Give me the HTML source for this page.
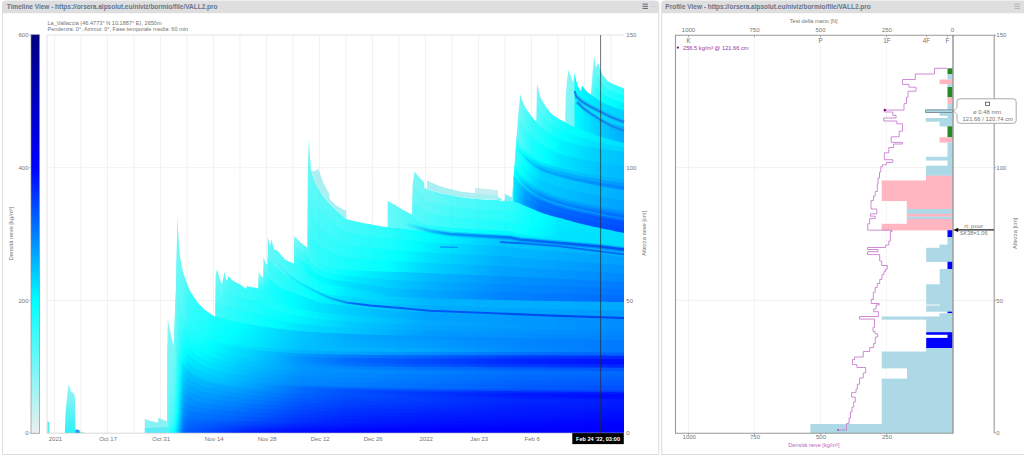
<!DOCTYPE html>
<html lang="it"><head><meta charset="utf-8"><title>niViz</title>
<style>html,body{margin:0;padding:0;background:#fff;overflow:hidden}body{width:1024px;height:457px;position:relative}</style></head>
<body>
<svg width="1024" height="457" viewBox="0 0 1024 457" style="position:absolute;left:0;top:0" font-family="Liberation Sans, sans-serif">
<path d="M2.5 454.5V4a3 3 0 0 1 3-3H655.8a3 3 0 0 1 3 3V454.5Z" fill="#fff" stroke="#dcdcdc" stroke-width="1"/>
<path d="M2.5 13.3V4a3 3 0 0 1 3-3H655.8a3 3 0 0 1 3 3V13.3Z" fill="#dedede"/>
<path d="M661.7 454.5V4a3 3 0 0 1 3-3H1027.0a3 3 0 0 1 3 3V454.5Z" fill="#fff" stroke="#dcdcdc" stroke-width="1"/>
<path d="M661.7 13.3V4a3 3 0 0 1 3-3H1027.0a3 3 0 0 1 3 3V13.3Z" fill="#dedede"/>
<text x="6.8" y="9.4" font-size="7.4" font-weight="bold" fill="#66748c" textLength="210.7" lengthAdjust="spacingAndGlyphs">Timeline View - https://orsera.alpsolut.eu/niviz/bormio/file/VALL2.pro</text>
<text x="665.3" y="9.4" font-size="7.4" font-weight="bold" fill="#66748c" textLength="205.5" lengthAdjust="spacingAndGlyphs">Profile View - https://orsera.alpsolut.eu/niviz/bormio/file/VALL2.pro</text>
<rect x="642.5" y="3.6" width="5.4" height="1.1" fill="#66727f" opacity="1.00"/>
<rect x="642.5" y="5.8" width="5.4" height="1.1" fill="#66727f" opacity="1.00"/>
<rect x="642.5" y="7.9" width="5.4" height="1.1" fill="#66727f" opacity="1.00"/>
<rect x="1014.5" y="3.6" width="5.4" height="1.1" fill="#66727f" opacity="0.35"/>
<rect x="1014.5" y="5.8" width="5.4" height="1.1" fill="#66727f" opacity="0.35"/>
<rect x="1014.5" y="7.9" width="5.4" height="1.1" fill="#66727f" opacity="0.35"/>
<rect x="651.2" y="6.2" width="4.2" height="0.9" fill="#c9cdd2"/>
<text x="47.5" y="24.9" font-size="5.6" fill="#747474">La_Vallaccia (46.4773° N 10.1887° E), 2650m</text>
<text x="47.5" y="31.3" font-size="5.6" fill="#747474">Pendenza: 0°, Azimut: 0°, Fase temporale media: 60 min</text>
<defs><linearGradient id="cb" x1="0" y1="1" x2="0" y2="0"><stop offset="0" stop-color="#eeeeee"/><stop offset="0.3333" stop-color="#00ffff"/><stop offset="0.6667" stop-color="#0000ff"/><stop offset="1" stop-color="#000080"/></linearGradient></defs>
<rect x="31" y="34.7" width="8.5" height="398.6" fill="url(#cb)" stroke="#888" stroke-opacity="0.8" stroke-width="0.8"/>
<text x="28.5" y="37.2" font-size="6.05" fill="#747474" text-anchor="end">600</text>
<text x="28.5" y="169.9" font-size="6.05" fill="#747474" text-anchor="end">400</text>
<text x="28.5" y="302.5" font-size="6.05" fill="#747474" text-anchor="end">200</text>
<text x="28.5" y="435.2" font-size="6.05" fill="#747474" text-anchor="end">0</text>
<line x1="29.3" y1="35.0" x2="31" y2="35.0" stroke="#aaa" stroke-width="0.7"/>
<line x1="29.3" y1="167.7" x2="31" y2="167.7" stroke="#aaa" stroke-width="0.7"/>
<line x1="29.3" y1="300.3" x2="31" y2="300.3" stroke="#aaa" stroke-width="0.7"/>
<line x1="29.3" y1="433.0" x2="31" y2="433.0" stroke="#aaa" stroke-width="0.7"/>
<text transform="translate(13.4 233.6) rotate(-90)" font-size="5.85" fill="#747474" text-anchor="middle">Densità neve [kg/m³]</text>
<line x1="54.4" y1="35" x2="54.4" y2="433" stroke="#f1f1f1" stroke-width="0.8"/>
<line x1="80.9" y1="35" x2="80.9" y2="433" stroke="#f1f1f1" stroke-width="0.8"/>
<line x1="107.4" y1="35" x2="107.4" y2="433" stroke="#f1f1f1" stroke-width="0.8"/>
<line x1="133.9" y1="35" x2="133.9" y2="433" stroke="#f1f1f1" stroke-width="0.8"/>
<line x1="160.4" y1="35" x2="160.4" y2="433" stroke="#f1f1f1" stroke-width="0.8"/>
<line x1="186.9" y1="35" x2="186.9" y2="433" stroke="#f1f1f1" stroke-width="0.8"/>
<line x1="213.4" y1="35" x2="213.4" y2="433" stroke="#f1f1f1" stroke-width="0.8"/>
<line x1="239.9" y1="35" x2="239.9" y2="433" stroke="#f1f1f1" stroke-width="0.8"/>
<line x1="266.4" y1="35" x2="266.4" y2="433" stroke="#f1f1f1" stroke-width="0.8"/>
<line x1="292.9" y1="35" x2="292.9" y2="433" stroke="#f1f1f1" stroke-width="0.8"/>
<line x1="319.4" y1="35" x2="319.4" y2="433" stroke="#f1f1f1" stroke-width="0.8"/>
<line x1="345.9" y1="35" x2="345.9" y2="433" stroke="#f1f1f1" stroke-width="0.8"/>
<line x1="372.4" y1="35" x2="372.4" y2="433" stroke="#f1f1f1" stroke-width="0.8"/>
<line x1="398.9" y1="35" x2="398.9" y2="433" stroke="#f1f1f1" stroke-width="0.8"/>
<line x1="425.4" y1="35" x2="425.4" y2="433" stroke="#f1f1f1" stroke-width="0.8"/>
<line x1="451.9" y1="35" x2="451.9" y2="433" stroke="#f1f1f1" stroke-width="0.8"/>
<line x1="478.4" y1="35" x2="478.4" y2="433" stroke="#f1f1f1" stroke-width="0.8"/>
<line x1="504.9" y1="35" x2="504.9" y2="433" stroke="#f1f1f1" stroke-width="0.8"/>
<line x1="531.4" y1="35" x2="531.4" y2="433" stroke="#f1f1f1" stroke-width="0.8"/>
<line x1="557.9" y1="35" x2="557.9" y2="433" stroke="#f1f1f1" stroke-width="0.8"/>
<line x1="584.4" y1="35" x2="584.4" y2="433" stroke="#f1f1f1" stroke-width="0.8"/>
<line x1="610.9" y1="35" x2="610.9" y2="433" stroke="#f1f1f1" stroke-width="0.8"/>
<line x1="47" y1="167.7" x2="624" y2="167.7" stroke="#f1f1f1" stroke-width="0.8"/>
<line x1="47" y1="300.3" x2="624" y2="300.3" stroke="#f1f1f1" stroke-width="0.8"/>
<g>
<defs><linearGradient id="g0" gradientUnits="userSpaceOnUse" x1="590.60" y1="0" x2="624.00" y2="0"><stop offset="0.0000" stop-color="#84f6f6"/><stop offset="0.3593" stop-color="#52f9f9"/><stop offset="0.6587" stop-color="#38fbfb"/><stop offset="1.0000" stop-color="#23fdfd"/></linearGradient><linearGradient id="g1" gradientUnits="userSpaceOnUse" x1="590.60" y1="0" x2="624.00" y2="0"><stop offset="0.0000" stop-color="#7af6f6"/><stop offset="0.2994" stop-color="#34fbfb"/><stop offset="1.0000" stop-color="#09fefe"/></linearGradient><linearGradient id="g2" gradientUnits="userSpaceOnUse" x1="590.60" y1="0" x2="624.00" y2="0"><stop offset="0.0000" stop-color="#70f7f7"/><stop offset="0.1198" stop-color="#42fafa"/><stop offset="0.2994" stop-color="#11fefe"/><stop offset="0.6587" stop-color="#00feff"/><stop offset="1.0000" stop-color="#00edff"/></linearGradient><linearGradient id="g3" gradientUnits="userSpaceOnUse" x1="565.50" y1="0" x2="624.00" y2="0"><stop offset="0.0000" stop-color="#86f5f5"/><stop offset="0.1368" stop-color="#7ff6f6"/><stop offset="0.1709" stop-color="#02ffff"/><stop offset="0.5812" stop-color="#00dfff"/><stop offset="1.0000" stop-color="#00cfff"/></linearGradient><linearGradient id="g4" gradientUnits="userSpaceOnUse" x1="565.50" y1="0" x2="624.00" y2="0"><stop offset="0.0000" stop-color="#80f6f6"/><stop offset="0.1368" stop-color="#76f7f7"/><stop offset="0.1709" stop-color="#00fbff"/><stop offset="0.5812" stop-color="#00cdff"/><stop offset="1.0000" stop-color="#00afff"/></linearGradient><linearGradient id="g5" gradientUnits="userSpaceOnUse" x1="535.40" y1="0" x2="624.00" y2="0"><stop offset="0.0000" stop-color="#73f7f7"/><stop offset="0.0226" stop-color="#71f7f7"/><stop offset="0.1129" stop-color="#49fafa"/><stop offset="0.3386" stop-color="#0cfefe"/><stop offset="0.4966" stop-color="#00feff"/><stop offset="0.7223" stop-color="#00eaff"/><stop offset="1.0000" stop-color="#00e1ff"/></linearGradient><linearGradient id="g6" gradientUnits="userSpaceOnUse" x1="535.40" y1="0" x2="624.00" y2="0"><stop offset="0.0000" stop-color="#5ef8f8"/><stop offset="0.0226" stop-color="#5cf8f8"/><stop offset="0.1129" stop-color="#37fbfb"/><stop offset="0.2032" stop-color="#1bfdfd"/><stop offset="0.3386" stop-color="#00ffff"/><stop offset="0.7223" stop-color="#00ddff"/><stop offset="1.0000" stop-color="#00d3ff"/></linearGradient><linearGradient id="g7" gradientUnits="userSpaceOnUse" x1="511.80" y1="0" x2="624.00" y2="0"><stop offset="0.0000" stop-color="#78f6f6"/><stop offset="0.0713" stop-color="#6df7f7"/><stop offset="0.1426" stop-color="#45fafa"/><stop offset="0.2139" stop-color="#2cfcfc"/><stop offset="0.3922" stop-color="#01ffff"/><stop offset="0.4456" stop-color="#00f4ff"/><stop offset="0.7843" stop-color="#00cdff"/><stop offset="1.0000" stop-color="#00c1ff"/></linearGradient><linearGradient id="g8" gradientUnits="userSpaceOnUse" x1="516.36" y1="0" x2="624.00" y2="0"><stop offset="0.0000" stop-color="#62f8f8"/><stop offset="0.0372" stop-color="#55f9f9"/><stop offset="0.0929" stop-color="#33fbfb"/><stop offset="0.1672" stop-color="#16fdfd"/><stop offset="0.2787" stop-color="#00feff"/><stop offset="0.4273" stop-color="#00e2ff"/><stop offset="0.7618" stop-color="#00c5ff"/><stop offset="1.0000" stop-color="#00b9ff"/></linearGradient><linearGradient id="g9" gradientUnits="userSpaceOnUse" x1="516.36" y1="0" x2="624.00" y2="0"><stop offset="0.0000" stop-color="#4ff9f9"/><stop offset="0.0929" stop-color="#19fdfd"/><stop offset="0.1486" stop-color="#02ffff"/><stop offset="0.1672" stop-color="#00f9ff"/><stop offset="0.4088" stop-color="#00cfff"/><stop offset="1.0000" stop-color="#00abff"/></linearGradient><linearGradient id="g10" gradientUnits="userSpaceOnUse" x1="516.36" y1="0" x2="624.00" y2="0"><stop offset="0.0000" stop-color="#3afbfb"/><stop offset="0.0743" stop-color="#07fefe"/><stop offset="0.0929" stop-color="#00fbff"/><stop offset="0.1858" stop-color="#00d6ff"/><stop offset="0.2787" stop-color="#00c5ff"/><stop offset="0.4645" stop-color="#00b3ff"/><stop offset="1.0000" stop-color="#0097ff"/></linearGradient><linearGradient id="g11" gradientUnits="userSpaceOnUse" x1="516.36" y1="0" x2="624.00" y2="0"><stop offset="0.0000" stop-color="#24fcfc"/><stop offset="0.0372" stop-color="#08fefe"/><stop offset="0.0557" stop-color="#00f7ff"/><stop offset="0.0929" stop-color="#00ddff"/><stop offset="0.2230" stop-color="#00acff"/><stop offset="1.0000" stop-color="#0083ff"/></linearGradient><linearGradient id="g12" gradientUnits="userSpaceOnUse" x1="515.66" y1="0" x2="624.00" y2="0"><stop offset="0.0000" stop-color="#38fbfb"/><stop offset="0.0923" stop-color="#00ffff"/><stop offset="0.2400" stop-color="#00d3ff"/><stop offset="1.0000" stop-color="#00adff"/></linearGradient><linearGradient id="g13" gradientUnits="userSpaceOnUse" x1="515.66" y1="0" x2="624.00" y2="0"><stop offset="0.0000" stop-color="#2dfcfc"/><stop offset="0.0738" stop-color="#00ffff"/><stop offset="0.2215" stop-color="#00cbff"/><stop offset="1.0000" stop-color="#00a1ff"/></linearGradient><linearGradient id="g14" gradientUnits="userSpaceOnUse" x1="514.50" y1="0" x2="624.00" y2="0"><stop offset="0.0000" stop-color="#26fcfc"/><stop offset="0.0548" stop-color="#04ffff"/><stop offset="0.0731" stop-color="#00f7ff"/><stop offset="0.1096" stop-color="#00e3ff"/><stop offset="0.2374" stop-color="#00baff"/><stop offset="1.0000" stop-color="#0092ff"/></linearGradient><linearGradient id="g15" gradientUnits="userSpaceOnUse" x1="514.50" y1="0" x2="624.00" y2="0"><stop offset="0.0000" stop-color="#17fdfd"/><stop offset="0.0365" stop-color="#00fdff"/><stop offset="0.0913" stop-color="#00d4ff"/><stop offset="0.2374" stop-color="#00a2ff"/><stop offset="1.0000" stop-color="#007eff"/></linearGradient><linearGradient id="g16" gradientUnits="userSpaceOnUse" x1="514.50" y1="0" x2="624.00" y2="0"><stop offset="0.0000" stop-color="#08fefe"/><stop offset="0.0183" stop-color="#00f9ff"/><stop offset="0.0913" stop-color="#00bfff"/><stop offset="0.1096" stop-color="#00b6ff"/><stop offset="0.2374" stop-color="#008bff"/><stop offset="1.0000" stop-color="#006aff"/></linearGradient><linearGradient id="g17" gradientUnits="userSpaceOnUse" x1="513.93" y1="0" x2="624.00" y2="0"><stop offset="0.0000" stop-color="#19fdfd"/><stop offset="0.0363" stop-color="#02ffff"/><stop offset="0.0545" stop-color="#00f5ff"/><stop offset="0.1090" stop-color="#00d3ff"/><stop offset="0.2362" stop-color="#00acff"/><stop offset="1.0000" stop-color="#0086ff"/></linearGradient><linearGradient id="g18" gradientUnits="userSpaceOnUse" x1="513.93" y1="0" x2="624.00" y2="0"><stop offset="0.0000" stop-color="#00ffff"/><stop offset="0.1090" stop-color="#00b3ff"/><stop offset="0.2362" stop-color="#008aff"/><stop offset="1.0000" stop-color="#0064ff"/></linearGradient><linearGradient id="g19" gradientUnits="userSpaceOnUse" x1="513.64" y1="0" x2="624.00" y2="0"><stop offset="0.0000" stop-color="#00efff"/><stop offset="0.1087" stop-color="#009fff"/><stop offset="0.2356" stop-color="#0076ff"/><stop offset="0.4168" stop-color="#0068ff"/><stop offset="1.0000" stop-color="#0050ff"/></linearGradient><linearGradient id="g20" gradientUnits="userSpaceOnUse" x1="513.64" y1="0" x2="624.00" y2="0"><stop offset="0.0000" stop-color="#00e5ff"/><stop offset="0.1087" stop-color="#0096ff"/><stop offset="0.2356" stop-color="#006eff"/><stop offset="0.4350" stop-color="#005fff"/><stop offset="1.0000" stop-color="#0049ff"/></linearGradient><linearGradient id="g21" gradientUnits="userSpaceOnUse" x1="412.40" y1="0" x2="624.00" y2="0"><stop offset="0.0000" stop-color="#7bf6f6"/><stop offset="0.1796" stop-color="#57f9f9"/><stop offset="0.4631" stop-color="#35fbfb"/><stop offset="0.5577" stop-color="#0efefe"/><stop offset="0.6144" stop-color="#01ffff"/><stop offset="0.6994" stop-color="#00eaff"/><stop offset="1.0000" stop-color="#00ddff"/></linearGradient><linearGradient id="g22" gradientUnits="userSpaceOnUse" x1="412.40" y1="0" x2="624.00" y2="0"><stop offset="0.0000" stop-color="#6bf7f7"/><stop offset="0.1796" stop-color="#47fafa"/><stop offset="0.4631" stop-color="#26fcfc"/><stop offset="0.5955" stop-color="#00ffff"/><stop offset="0.6994" stop-color="#00e7ff"/><stop offset="1.0000" stop-color="#00ddff"/></linearGradient><linearGradient id="g23" gradientUnits="userSpaceOnUse" x1="412.40" y1="0" x2="624.00" y2="0"><stop offset="0.0000" stop-color="#5bf8f8"/><stop offset="0.1418" stop-color="#3dfbfb"/><stop offset="0.4631" stop-color="#17fdfd"/><stop offset="0.5671" stop-color="#00ffff"/><stop offset="0.6994" stop-color="#00e4ff"/><stop offset="1.0000" stop-color="#00dcff"/></linearGradient><linearGradient id="g24" gradientUnits="userSpaceOnUse" x1="387.60" y1="0" x2="624.00" y2="0"><stop offset="0.0000" stop-color="#68f8f8"/><stop offset="0.1015" stop-color="#48fafa"/><stop offset="0.1777" stop-color="#27fcfc"/><stop offset="0.4230" stop-color="#00ffff"/><stop offset="0.7107" stop-color="#00e4ff"/><stop offset="1.0000" stop-color="#00daff"/></linearGradient><linearGradient id="g25" gradientUnits="userSpaceOnUse" x1="307.70" y1="0" x2="624.00" y2="0"><stop offset="0.0000" stop-color="#71f7f7"/><stop offset="0.0126" stop-color="#60f8f8"/><stop offset="0.0253" stop-color="#5bf8f8"/><stop offset="0.2466" stop-color="#2cfcfc"/><stop offset="0.3794" stop-color="#00feff"/><stop offset="0.6133" stop-color="#00c6ff"/><stop offset="1.0000" stop-color="#00aaff"/></linearGradient><linearGradient id="g26" gradientUnits="userSpaceOnUse" x1="307.70" y1="0" x2="624.00" y2="0"><stop offset="0.0000" stop-color="#65f8f8"/><stop offset="0.0126" stop-color="#53f9f9"/><stop offset="0.0316" stop-color="#4cfafa"/><stop offset="0.1201" stop-color="#35fbfb"/><stop offset="0.2466" stop-color="#1efdfd"/><stop offset="0.3414" stop-color="#00feff"/><stop offset="0.3920" stop-color="#00ecff"/><stop offset="0.6070" stop-color="#00bbff"/><stop offset="1.0000" stop-color="#009fff"/></linearGradient><linearGradient id="g27" gradientUnits="userSpaceOnUse" x1="307.70" y1="0" x2="624.00" y2="0"><stop offset="0.0000" stop-color="#59f9f9"/><stop offset="0.0126" stop-color="#45fafa"/><stop offset="0.0190" stop-color="#42fafa"/><stop offset="0.2972" stop-color="#00ffff"/><stop offset="0.3857" stop-color="#00e0ff"/><stop offset="0.6070" stop-color="#00b0ff"/><stop offset="1.0000" stop-color="#0093ff"/></linearGradient><linearGradient id="g28" gradientUnits="userSpaceOnUse" x1="307.70" y1="0" x2="624.00" y2="0"><stop offset="0.0000" stop-color="#4df9f9"/><stop offset="0.0126" stop-color="#38fbfb"/><stop offset="0.0316" stop-color="#31fbfb"/><stop offset="0.1201" stop-color="#19fdfd"/><stop offset="0.2529" stop-color="#00ffff"/><stop offset="0.3857" stop-color="#00d3ff"/><stop offset="0.6007" stop-color="#00a6ff"/><stop offset="1.0000" stop-color="#0088ff"/></linearGradient><linearGradient id="g29" gradientUnits="userSpaceOnUse" x1="294.00" y1="0" x2="624.00" y2="0"><stop offset="0.0000" stop-color="#72f7f7"/><stop offset="0.0424" stop-color="#45fafa"/><stop offset="0.1091" stop-color="#1afdfd"/><stop offset="0.1697" stop-color="#00feff"/><stop offset="0.4182" stop-color="#00b9ff"/><stop offset="0.6303" stop-color="#0094ff"/><stop offset="1.0000" stop-color="#007cff"/></linearGradient><linearGradient id="g30" gradientUnits="userSpaceOnUse" x1="294.00" y1="0" x2="624.00" y2="0"><stop offset="0.0000" stop-color="#5cf8f8"/><stop offset="0.0424" stop-color="#2afcfc"/><stop offset="0.1273" stop-color="#00feff"/><stop offset="0.1758" stop-color="#00ecff"/><stop offset="0.4121" stop-color="#00b1ff"/><stop offset="0.6242" stop-color="#008cff"/><stop offset="1.0000" stop-color="#0074ff"/></linearGradient><linearGradient id="g31" gradientUnits="userSpaceOnUse" x1="294.00" y1="0" x2="624.00" y2="0"><stop offset="0.0000" stop-color="#46fafa"/><stop offset="0.0424" stop-color="#0efefe"/><stop offset="0.0788" stop-color="#00feff"/><stop offset="0.1818" stop-color="#00dbff"/><stop offset="0.4061" stop-color="#00a9ff"/><stop offset="0.6303" stop-color="#0083ff"/><stop offset="1.0000" stop-color="#006cff"/></linearGradient><linearGradient id="g32" gradientUnits="userSpaceOnUse" x1="258.50" y1="0" x2="624.00" y2="0"><stop offset="0.0000" stop-color="#70f7f7"/><stop offset="0.0492" stop-color="#57f9f9"/><stop offset="0.1423" stop-color="#18fdfd"/><stop offset="0.1970" stop-color="#00ffff"/><stop offset="0.2517" stop-color="#00e5ff"/><stop offset="0.4761" stop-color="#00b4ff"/><stop offset="1.0000" stop-color="#00a9ff"/></linearGradient><linearGradient id="g33" gradientUnits="userSpaceOnUse" x1="258.50" y1="0" x2="624.00" y2="0"><stop offset="0.0000" stop-color="#56f9f9"/><stop offset="0.0274" stop-color="#41fafa"/><stop offset="0.1532" stop-color="#00feff"/><stop offset="0.2517" stop-color="#00d8ff"/><stop offset="0.4706" stop-color="#00acff"/><stop offset="1.0000" stop-color="#009bff"/></linearGradient><linearGradient id="g34" gradientUnits="userSpaceOnUse" x1="258.50" y1="0" x2="624.00" y2="0"><stop offset="0.0000" stop-color="#3cfbfb"/><stop offset="0.0274" stop-color="#1dfdfd"/><stop offset="0.0930" stop-color="#00feff"/><stop offset="0.1423" stop-color="#00eaff"/><stop offset="0.2462" stop-color="#00cdff"/><stop offset="0.4651" stop-color="#00a4ff"/><stop offset="1.0000" stop-color="#008dff"/></linearGradient><linearGradient id="g35" gradientUnits="userSpaceOnUse" x1="215.50" y1="0" x2="624.00" y2="0"><stop offset="0.0000" stop-color="#6df7f7"/><stop offset="0.0392" stop-color="#45fafa"/><stop offset="0.2056" stop-color="#00ffff"/><stop offset="0.3280" stop-color="#00d5ff"/><stop offset="0.5239" stop-color="#00a9ff"/><stop offset="1.0000" stop-color="#008aff"/></linearGradient><linearGradient id="g36" gradientUnits="userSpaceOnUse" x1="215.50" y1="0" x2="624.00" y2="0"><stop offset="0.0000" stop-color="#59f9f9"/><stop offset="0.0392" stop-color="#38fbfb"/><stop offset="0.1763" stop-color="#00feff"/><stop offset="0.3280" stop-color="#00ccff"/><stop offset="0.5288" stop-color="#00a2ff"/><stop offset="1.0000" stop-color="#0086ff"/></linearGradient><linearGradient id="g37" gradientUnits="userSpaceOnUse" x1="215.50" y1="0" x2="624.00" y2="0"><stop offset="0.0000" stop-color="#45fafa"/><stop offset="0.0392" stop-color="#2bfcfc"/><stop offset="0.1420" stop-color="#00feff"/><stop offset="0.2105" stop-color="#00e1ff"/><stop offset="0.5239" stop-color="#009cff"/><stop offset="1.0000" stop-color="#0082ff"/></linearGradient><linearGradient id="g38" gradientUnits="userSpaceOnUse" x1="167.80" y1="0" x2="624.00" y2="0"><stop offset="0.0000" stop-color="#82f6f6"/><stop offset="0.0219" stop-color="#73f7f7"/><stop offset="0.0482" stop-color="#3bfbfb"/><stop offset="0.1052" stop-color="#17fdfd"/><stop offset="0.1578" stop-color="#00ffff"/><stop offset="0.2893" stop-color="#00c8ff"/><stop offset="0.4033" stop-color="#00a9ff"/><stop offset="0.6576" stop-color="#008cff"/><stop offset="1.0000" stop-color="#0079ff"/></linearGradient><linearGradient id="g39" gradientUnits="userSpaceOnUse" x1="167.80" y1="0" x2="624.00" y2="0"><stop offset="0.0000" stop-color="#81f6f6"/><stop offset="0.0219" stop-color="#71f7f7"/><stop offset="0.0482" stop-color="#38fbfb"/><stop offset="0.1052" stop-color="#13fefe"/><stop offset="0.1491" stop-color="#00ffff"/><stop offset="0.2893" stop-color="#00c6ff"/><stop offset="0.3989" stop-color="#00adff"/><stop offset="0.7672" stop-color="#0086ff"/><stop offset="1.0000" stop-color="#0079ff"/></linearGradient><linearGradient id="g40" gradientUnits="userSpaceOnUse" x1="167.80" y1="0" x2="624.00" y2="0"><stop offset="0.0000" stop-color="#7ff6f6"/><stop offset="0.0219" stop-color="#70f7f7"/><stop offset="0.0482" stop-color="#35fbfb"/><stop offset="0.0526" stop-color="#31fbfb"/><stop offset="0.1052" stop-color="#0ffefe"/><stop offset="0.1403" stop-color="#00ffff"/><stop offset="0.2893" stop-color="#00c3ff"/><stop offset="0.3989" stop-color="#00b0ff"/><stop offset="0.7716" stop-color="#0088ff"/><stop offset="1.0000" stop-color="#0079ff"/></linearGradient><linearGradient id="g41" gradientUnits="userSpaceOnUse" x1="167.80" y1="0" x2="624.00" y2="0"><stop offset="0.0000" stop-color="#7ef6f6"/><stop offset="0.0219" stop-color="#6ef7f7"/><stop offset="0.0482" stop-color="#32fbfb"/><stop offset="0.1008" stop-color="#0dfefe"/><stop offset="0.1315" stop-color="#00feff"/><stop offset="0.2937" stop-color="#00c0ff"/><stop offset="0.5699" stop-color="#00a6ff"/><stop offset="0.7804" stop-color="#008aff"/><stop offset="1.0000" stop-color="#0079ff"/></linearGradient><linearGradient id="g42" gradientUnits="userSpaceOnUse" x1="167.80" y1="0" x2="624.00" y2="0"><stop offset="0.0000" stop-color="#7df6f6"/><stop offset="0.0219" stop-color="#6bf7f7"/><stop offset="0.0482" stop-color="#2ffcfc"/><stop offset="0.1184" stop-color="#00feff"/><stop offset="0.2937" stop-color="#00b3ff"/><stop offset="0.7628" stop-color="#0073ff"/><stop offset="1.0000" stop-color="#005fff"/></linearGradient><linearGradient id="g43" gradientUnits="userSpaceOnUse" x1="167.80" y1="0" x2="624.00" y2="0"><stop offset="0.0000" stop-color="#7df6f6"/><stop offset="0.0219" stop-color="#68f8f8"/><stop offset="0.0482" stop-color="#2cfcfc"/><stop offset="0.1008" stop-color="#00ffff"/><stop offset="0.2893" stop-color="#009eff"/><stop offset="0.3946" stop-color="#007dff"/><stop offset="0.7760" stop-color="#003dff"/><stop offset="1.0000" stop-color="#002aff"/></linearGradient><linearGradient id="g44" gradientUnits="userSpaceOnUse" x1="167.80" y1="0" x2="624.00" y2="0"><stop offset="0.0000" stop-color="#7df6f6"/><stop offset="0.0219" stop-color="#66f8f8"/><stop offset="0.0482" stop-color="#2afcfc"/><stop offset="0.0964" stop-color="#00ffff"/><stop offset="0.1491" stop-color="#00e0ff"/><stop offset="0.2017" stop-color="#00caff"/><stop offset="0.2893" stop-color="#0093ff"/><stop offset="0.3946" stop-color="#006aff"/><stop offset="0.7760" stop-color="#0023ff"/><stop offset="1.0000" stop-color="#000fff"/></linearGradient><linearGradient id="g45" gradientUnits="userSpaceOnUse" x1="167.80" y1="0" x2="624.00" y2="0"><stop offset="0.0000" stop-color="#7bf6f6"/><stop offset="0.0219" stop-color="#65f8f8"/><stop offset="0.0351" stop-color="#41fafa"/><stop offset="0.0482" stop-color="#28fcfc"/><stop offset="0.0964" stop-color="#00fdff"/><stop offset="0.2893" stop-color="#0094ff"/><stop offset="0.3902" stop-color="#0074ff"/><stop offset="0.7584" stop-color="#0039ff"/><stop offset="1.0000" stop-color="#0027ff"/></linearGradient><linearGradient id="g46" gradientUnits="userSpaceOnUse" x1="167.80" y1="0" x2="624.00" y2="0"><stop offset="0.0000" stop-color="#78f6f6"/><stop offset="0.0175" stop-color="#69f7f7"/><stop offset="0.0351" stop-color="#3bfbfb"/><stop offset="0.0482" stop-color="#24fcfc"/><stop offset="0.0921" stop-color="#00feff"/><stop offset="0.1534" stop-color="#00d8ff"/><stop offset="0.2893" stop-color="#0098ff"/><stop offset="0.3113" stop-color="#0093ff"/><stop offset="0.3989" stop-color="#0083ff"/><stop offset="0.7672" stop-color="#005fff"/><stop offset="1.0000" stop-color="#0055ff"/></linearGradient><linearGradient id="g47" gradientUnits="userSpaceOnUse" x1="167.80" y1="0" x2="624.00" y2="0"><stop offset="0.0000" stop-color="#77f6f6"/><stop offset="0.0175" stop-color="#66f8f8"/><stop offset="0.0351" stop-color="#32fbfb"/><stop offset="0.0482" stop-color="#1afdfd"/><stop offset="0.0833" stop-color="#00feff"/><stop offset="0.1622" stop-color="#00ceff"/><stop offset="0.2937" stop-color="#0096ff"/><stop offset="0.7584" stop-color="#0070ff"/><stop offset="1.0000" stop-color="#0068ff"/></linearGradient><linearGradient id="g48" gradientUnits="userSpaceOnUse" x1="167.80" y1="0" x2="624.00" y2="0"><stop offset="0.0000" stop-color="#77f6f6"/><stop offset="0.0175" stop-color="#64f8f8"/><stop offset="0.0219" stop-color="#59f9f9"/><stop offset="0.0351" stop-color="#24fcfc"/><stop offset="0.0482" stop-color="#0bfefe"/><stop offset="0.0658" stop-color="#00feff"/><stop offset="0.1052" stop-color="#00e4ff"/><stop offset="0.1754" stop-color="#00c1ff"/><stop offset="0.2937" stop-color="#0091ff"/><stop offset="0.7716" stop-color="#0069ff"/><stop offset="1.0000" stop-color="#0060ff"/></linearGradient><linearGradient id="g49" gradientUnits="userSpaceOnUse" x1="167.80" y1="0" x2="624.00" y2="0"><stop offset="0.0000" stop-color="#77f6f6"/><stop offset="0.0175" stop-color="#61f8f8"/><stop offset="0.0219" stop-color="#55f9f9"/><stop offset="0.0351" stop-color="#16fdfd"/><stop offset="0.0438" stop-color="#04ffff"/><stop offset="0.0482" stop-color="#00f9ff"/><stop offset="0.2060" stop-color="#00acff"/><stop offset="0.2893" stop-color="#008dff"/><stop offset="0.7804" stop-color="#0062ff"/><stop offset="1.0000" stop-color="#0058ff"/></linearGradient><linearGradient id="g50" gradientUnits="userSpaceOnUse" x1="167.80" y1="0" x2="624.00" y2="0"><stop offset="0.0000" stop-color="#77f6f6"/><stop offset="0.0175" stop-color="#5ff8f8"/><stop offset="0.0219" stop-color="#50f9f9"/><stop offset="0.0307" stop-color="#1cfdfd"/><stop offset="0.0351" stop-color="#09fefe"/><stop offset="0.0395" stop-color="#00feff"/><stop offset="0.0482" stop-color="#00e9ff"/><stop offset="0.0526" stop-color="#00e6ff"/><stop offset="0.2060" stop-color="#00a5ff"/><stop offset="0.2893" stop-color="#0088ff"/><stop offset="0.7716" stop-color="#005cff"/><stop offset="1.0000" stop-color="#0050ff"/></linearGradient><linearGradient id="g51" gradientUnits="userSpaceOnUse" x1="167.80" y1="0" x2="624.00" y2="0"><stop offset="0.0000" stop-color="#77f6f6"/><stop offset="0.0175" stop-color="#5cf8f8"/><stop offset="0.0219" stop-color="#4df9f9"/><stop offset="0.0307" stop-color="#15fdfd"/><stop offset="0.0351" stop-color="#00ffff"/><stop offset="0.0482" stop-color="#00deff"/><stop offset="0.2981" stop-color="#007eff"/><stop offset="0.4121" stop-color="#006dff"/><stop offset="0.7716" stop-color="#0049ff"/><stop offset="1.0000" stop-color="#003cff"/></linearGradient><linearGradient id="g52" gradientUnits="userSpaceOnUse" x1="167.80" y1="0" x2="624.00" y2="0"><stop offset="0.0000" stop-color="#77f6f6"/><stop offset="0.0175" stop-color="#5bf9f9"/><stop offset="0.0219" stop-color="#4bfafa"/><stop offset="0.0307" stop-color="#13fefe"/><stop offset="0.0351" stop-color="#00fcff"/><stop offset="0.0482" stop-color="#00daff"/><stop offset="0.0526" stop-color="#00d7ff"/><stop offset="0.1403" stop-color="#00baff"/><stop offset="0.2893" stop-color="#0073ff"/><stop offset="0.4033" stop-color="#0059ff"/><stop offset="0.7716" stop-color="#0029ff"/><stop offset="1.0000" stop-color="#001bff"/></linearGradient><linearGradient id="g53" gradientUnits="userSpaceOnUse" x1="167.80" y1="0" x2="624.00" y2="0"><stop offset="0.0000" stop-color="#77f6f6"/><stop offset="0.0175" stop-color="#5af9f9"/><stop offset="0.0219" stop-color="#4afafa"/><stop offset="0.0307" stop-color="#11fefe"/><stop offset="0.0351" stop-color="#00faff"/><stop offset="0.0482" stop-color="#00d7ff"/><stop offset="0.1447" stop-color="#00b6ff"/><stop offset="0.2937" stop-color="#006bff"/><stop offset="0.3946" stop-color="#0050ff"/><stop offset="0.7672" stop-color="#001aff"/><stop offset="1.0000" stop-color="#000aff"/></linearGradient><linearGradient id="g54" gradientUnits="userSpaceOnUse" x1="167.80" y1="0" x2="624.00" y2="0"><stop offset="0.0000" stop-color="#76f7f7"/><stop offset="0.0175" stop-color="#59f9f9"/><stop offset="0.0219" stop-color="#49fafa"/><stop offset="0.0307" stop-color="#0bfefe"/><stop offset="0.0351" stop-color="#00f3ff"/><stop offset="0.0482" stop-color="#00d3ff"/><stop offset="0.1447" stop-color="#00b2ff"/><stop offset="0.2893" stop-color="#006bff"/><stop offset="0.3683" stop-color="#0056ff"/><stop offset="0.7716" stop-color="#001dff"/><stop offset="1.0000" stop-color="#000fff"/></linearGradient><linearGradient id="g55" gradientUnits="userSpaceOnUse" x1="167.80" y1="0" x2="624.00" y2="0"><stop offset="0.0000" stop-color="#73f7f7"/><stop offset="0.0175" stop-color="#58f9f9"/><stop offset="0.0219" stop-color="#46fafa"/><stop offset="0.0307" stop-color="#00feff"/><stop offset="0.0351" stop-color="#00e4ff"/><stop offset="0.0526" stop-color="#00c8ff"/><stop offset="0.1578" stop-color="#00a5ff"/><stop offset="0.2893" stop-color="#0068ff"/><stop offset="0.3814" stop-color="#0051ff"/><stop offset="0.7672" stop-color="#0025ff"/><stop offset="1.0000" stop-color="#001aff"/></linearGradient><linearGradient id="g56" gradientUnits="userSpaceOnUse" x1="167.80" y1="0" x2="624.00" y2="0"><stop offset="0.0000" stop-color="#71f7f7"/><stop offset="0.0175" stop-color="#54f9f9"/><stop offset="0.0219" stop-color="#40fafa"/><stop offset="0.0263" stop-color="#1afdfd"/><stop offset="0.0307" stop-color="#00f2ff"/><stop offset="0.0351" stop-color="#00d6ff"/><stop offset="0.0482" stop-color="#00c0ff"/><stop offset="0.1578" stop-color="#009cff"/><stop offset="0.2893" stop-color="#0062ff"/><stop offset="0.3989" stop-color="#0049ff"/><stop offset="0.7716" stop-color="#0026ff"/><stop offset="1.0000" stop-color="#001cff"/></linearGradient><linearGradient id="g57" gradientUnits="userSpaceOnUse" x1="167.80" y1="0" x2="624.00" y2="0"><stop offset="0.0000" stop-color="#70f7f7"/><stop offset="0.0175" stop-color="#4cfafa"/><stop offset="0.0219" stop-color="#37fbfb"/><stop offset="0.0263" stop-color="#10fefe"/><stop offset="0.0307" stop-color="#00e6ff"/><stop offset="0.0351" stop-color="#00caff"/><stop offset="0.0482" stop-color="#00b5ff"/><stop offset="0.0570" stop-color="#00b1ff"/><stop offset="0.1622" stop-color="#0090ff"/><stop offset="0.2893" stop-color="#005bff"/><stop offset="0.3989" stop-color="#0042ff"/><stop offset="0.7716" stop-color="#0021ff"/><stop offset="1.0000" stop-color="#0018ff"/></linearGradient><linearGradient id="g58" gradientUnits="userSpaceOnUse" x1="167.80" y1="0" x2="624.00" y2="0"><stop offset="0.0000" stop-color="#6ff7f7"/><stop offset="0.0175" stop-color="#45fafa"/><stop offset="0.0219" stop-color="#2efcfc"/><stop offset="0.0263" stop-color="#06ffff"/><stop offset="0.0307" stop-color="#00dbff"/><stop offset="0.0351" stop-color="#00bfff"/><stop offset="0.0482" stop-color="#00a9ff"/><stop offset="0.0570" stop-color="#00a5ff"/><stop offset="0.1622" stop-color="#0086ff"/><stop offset="0.2893" stop-color="#0053ff"/><stop offset="0.3989" stop-color="#003bff"/><stop offset="0.7672" stop-color="#001cff"/><stop offset="1.0000" stop-color="#0014ff"/></linearGradient><linearGradient id="g59" gradientUnits="userSpaceOnUse" x1="167.80" y1="0" x2="624.00" y2="0"><stop offset="0.0000" stop-color="#6ef7f7"/><stop offset="0.0175" stop-color="#3dfbfb"/><stop offset="0.0219" stop-color="#25fcfc"/><stop offset="0.0263" stop-color="#00fbff"/><stop offset="0.0307" stop-color="#00d0ff"/><stop offset="0.0351" stop-color="#00b3ff"/><stop offset="0.0482" stop-color="#009dff"/><stop offset="0.1491" stop-color="#0080ff"/><stop offset="0.2893" stop-color="#004bff"/><stop offset="0.3989" stop-color="#0034ff"/><stop offset="0.5743" stop-color="#0024ff"/><stop offset="1.0000" stop-color="#000fff"/></linearGradient><linearGradient id="g60" gradientUnits="userSpaceOnUse" x1="167.80" y1="0" x2="624.00" y2="0"><stop offset="0.0000" stop-color="#6df7f7"/><stop offset="0.0175" stop-color="#36fbfb"/><stop offset="0.0219" stop-color="#1cfdfd"/><stop offset="0.0263" stop-color="#00f1ff"/><stop offset="0.0307" stop-color="#00c5ff"/><stop offset="0.0351" stop-color="#00a7ff"/><stop offset="0.0482" stop-color="#0091ff"/><stop offset="0.1578" stop-color="#0073ff"/><stop offset="0.2850" stop-color="#0045ff"/><stop offset="0.3989" stop-color="#002dff"/><stop offset="0.5612" stop-color="#001fff"/><stop offset="1.0000" stop-color="#000bff"/></linearGradient><linearGradient id="g61" gradientUnits="userSpaceOnUse" x1="167.80" y1="0" x2="624.00" y2="0"><stop offset="0.0000" stop-color="#6cf7f7"/><stop offset="0.0175" stop-color="#2efcfc"/><stop offset="0.0219" stop-color="#14fefe"/><stop offset="0.0263" stop-color="#00e7ff"/><stop offset="0.0307" stop-color="#00b9ff"/><stop offset="0.0351" stop-color="#009bff"/><stop offset="0.0482" stop-color="#0085ff"/><stop offset="0.1578" stop-color="#0069ff"/><stop offset="0.2893" stop-color="#003cff"/><stop offset="0.3946" stop-color="#0027ff"/><stop offset="0.5743" stop-color="#0018ff"/><stop offset="1.0000" stop-color="#0007ff"/></linearGradient><linearGradient id="g62" gradientUnits="userSpaceOnUse" x1="167.80" y1="0" x2="624.00" y2="0"><stop offset="0.0000" stop-color="#6cf7f7"/><stop offset="0.0175" stop-color="#27fcfc"/><stop offset="0.0219" stop-color="#0bfefe"/><stop offset="0.0263" stop-color="#00dcff"/><stop offset="0.0307" stop-color="#00aeff"/><stop offset="0.0351" stop-color="#008fff"/><stop offset="0.0482" stop-color="#0079ff"/><stop offset="0.1534" stop-color="#0060ff"/><stop offset="0.2893" stop-color="#0034ff"/><stop offset="0.3946" stop-color="#0020ff"/><stop offset="0.5743" stop-color="#0012ff"/><stop offset="1.0000" stop-color="#0002ff"/></linearGradient><linearGradient id="g63" gradientUnits="userSpaceOnUse" x1="167.80" y1="0" x2="624.00" y2="0"><stop offset="0.0000" stop-color="#66f8f8"/><stop offset="0.0175" stop-color="#1dfdfd"/><stop offset="0.0219" stop-color="#01ffff"/><stop offset="0.0307" stop-color="#00a4ff"/><stop offset="0.0351" stop-color="#0086ff"/><stop offset="0.0482" stop-color="#0070ff"/><stop offset="0.2893" stop-color="#002cff"/><stop offset="0.4077" stop-color="#0018ff"/><stop offset="0.5699" stop-color="#000dff"/><stop offset="1.0000" stop-color="#0000ff"/></linearGradient><linearGradient id="g64" gradientUnits="userSpaceOnUse" x1="167.80" y1="0" x2="624.00" y2="0"><stop offset="0.0000" stop-color="#5df8f8"/><stop offset="0.0175" stop-color="#12fefe"/><stop offset="0.0219" stop-color="#00f4ff"/><stop offset="0.0307" stop-color="#009bff"/><stop offset="0.0351" stop-color="#007eff"/><stop offset="0.0482" stop-color="#006aff"/><stop offset="0.2718" stop-color="#0028ff"/><stop offset="0.4077" stop-color="#0012ff"/><stop offset="0.5831" stop-color="#0008ff"/><stop offset="1.0000" stop-color="#0000fe"/></linearGradient><linearGradient id="g65" gradientUnits="userSpaceOnUse" x1="167.80" y1="0" x2="624.00" y2="0"><stop offset="0.0000" stop-color="#53f9f9"/><stop offset="0.0175" stop-color="#06ffff"/><stop offset="0.0219" stop-color="#00e8ff"/><stop offset="0.0307" stop-color="#0093ff"/><stop offset="0.0351" stop-color="#0077ff"/><stop offset="0.0482" stop-color="#0063ff"/><stop offset="0.1929" stop-color="#0032ff"/><stop offset="0.2937" stop-color="#001aff"/><stop offset="0.4077" stop-color="#000cff"/><stop offset="0.7146" stop-color="#0000ff"/><stop offset="1.0000" stop-color="#0000fd"/></linearGradient><linearGradient id="g66" gradientUnits="userSpaceOnUse" x1="167.80" y1="0" x2="624.00" y2="0"><stop offset="0.0000" stop-color="#4afafa"/><stop offset="0.0132" stop-color="#0ffefe"/><stop offset="0.0175" stop-color="#00f9ff"/><stop offset="0.0219" stop-color="#00dcff"/><stop offset="0.0307" stop-color="#008aff"/><stop offset="0.0351" stop-color="#006fff"/><stop offset="0.0482" stop-color="#005dff"/><stop offset="0.2017" stop-color="#0024ff"/><stop offset="0.2893" stop-color="#0012ff"/><stop offset="0.4033" stop-color="#0006ff"/><stop offset="0.5655" stop-color="#0000ff"/><stop offset="1.0000" stop-color="#0000fc"/></linearGradient><linearGradient id="g67" gradientUnits="userSpaceOnUse" x1="167.80" y1="0" x2="624.00" y2="0"><stop offset="0.0000" stop-color="#40fafa"/><stop offset="0.0132" stop-color="#04ffff"/><stop offset="0.0175" stop-color="#00edff"/><stop offset="0.0219" stop-color="#00cfff"/><stop offset="0.0307" stop-color="#0081ff"/><stop offset="0.0351" stop-color="#0068ff"/><stop offset="0.0482" stop-color="#0057ff"/><stop offset="0.1052" stop-color="#0043ff"/><stop offset="0.1622" stop-color="#0024ff"/><stop offset="0.1973" stop-color="#001aff"/><stop offset="0.2850" stop-color="#000aff"/><stop offset="0.4033" stop-color="#0000ff"/><stop offset="1.0000" stop-color="#0000fc"/></linearGradient></defs><path d="M590.6 433.0L590.6 94.3L591.0 94.0L592.0 80.0L594.0 56.0L596.0 67.7L596.6 66.2L598.0 62.8L600.0 68.6L600.5 70.0L602.6 74.7L603.0 75.6L608.0 81.5L608.6 81.8L614.0 84.4L614.6 84.7L616.0 85.2L619.0 86.5L620.6 87.1L624.0 88.4L624.0 433.0Z" fill="url(#g0)"/><path d="M590.6 433.0L590.6 94.3L591.0 94.2L592.0 85.2L594.0 69.7L596.0 77.9L596.6 77.1L598.0 75.1L600.0 79.4L600.5 80.4L602.6 83.9L603.0 84.6L608.0 89.3L608.6 89.6L614.0 92.0L614.6 92.3L616.0 92.8L619.0 94.0L620.6 94.6L624.0 95.8L624.0 433.0Z" fill="url(#g1)"/><path d="M590.6 433.0L590.6 94.3L591.0 94.4L592.0 90.3L594.0 83.3L596.0 88.2L596.6 88.0L598.0 87.5L600.0 90.2L600.5 90.9L602.6 93.2L603.0 93.6L608.0 97.2L608.6 97.4L614.0 99.7L614.6 99.9L616.0 100.4L619.0 101.5L620.6 102.0L624.0 103.1L624.0 433.0Z" fill="url(#g2)"/><path d="M565.5 433.0L565.5 122.0L565.6 100.0L566.0 94.3L567.0 80.0L568.5 69.7L571.0 77.0L571.5 78.4L573.0 82.5L574.6 72.6L575.0 74.7L576.0 80.0L577.5 84.8L578.0 86.4L581.0 91.3L582.0 85.4L583.5 87.5L585.0 89.5L587.6 92.3L589.5 93.6L590.0 93.9L590.6 94.3L594.0 97.0L595.5 98.1L596.6 98.8L600.0 101.0L601.5 101.8L602.6 102.4L607.5 104.8L608.0 105.0L608.6 105.3L612.0 106.6L613.5 107.1L614.6 107.5L616.0 108.0L619.5 109.2L620.6 109.5L624.0 110.5L624.0 433.0Z" fill="url(#g3)"/><path d="M565.5 433.0L565.5 122.3L565.6 111.3L566.0 108.6L567.0 101.8L568.5 97.1L571.0 101.2L571.5 102.0L573.0 104.4L574.6 99.7L575.0 100.9L576.0 103.7L577.5 106.4L578.0 107.3L581.0 110.4L582.0 107.6L583.5 109.0L585.0 110.3L587.6 112.2L589.5 113.2L590.0 113.4L590.6 113.8L594.0 115.7L595.5 116.5L596.6 117.1L600.0 118.8L601.5 119.4L602.6 119.9L607.5 121.8L608.0 121.9L608.6 122.2L612.0 123.3L613.5 123.8L614.6 124.1L616.0 124.5L619.5 125.5L620.6 125.8L624.0 126.8L624.0 433.0Z" fill="url(#g4)"/><path d="M535.4 433.0L535.4 121.0L536.5 121.0L537.0 83.5L538.5 90.0L540.0 96.3L541.4 99.0L543.0 102.0L546.0 107.0L547.4 108.8L549.5 111.5L553.0 115.0L553.4 115.3L559.0 119.0L559.4 119.2L565.0 122.0L565.4 122.4L566.0 123.0L571.0 125.5L571.4 125.6L575.0 127.0L577.0 127.8L577.4 128.0L580.0 129.1L583.0 130.3L583.4 130.5L589.0 132.6L589.4 132.8L590.0 133.0L595.0 134.8L595.4 135.0L600.0 136.5L601.0 136.8L601.4 136.9L607.0 138.6L607.4 138.7L612.0 140.0L613.0 140.3L613.4 140.4L619.0 141.8L619.4 141.9L624.0 143.0L624.0 433.0Z" fill="url(#g5)"/><path d="M535.4 433.0L535.4 121.0L536.5 121.5L537.0 103.0L538.5 107.1L540.0 111.2L541.4 113.1L543.0 115.3L546.0 119.0L547.4 120.4L549.5 122.5L553.0 125.2L553.4 125.5L559.0 128.8L559.4 129.0L565.0 131.5L565.4 131.8L566.0 132.2L571.0 134.2L571.4 134.3L575.0 135.4L577.0 136.1L577.4 136.2L580.0 137.0L583.0 138.0L583.4 138.1L589.0 139.7L589.4 139.8L590.0 139.9L595.0 141.3L595.4 141.4L600.0 142.5L601.0 142.7L601.4 142.8L607.0 144.1L607.4 144.2L612.0 145.2L613.0 145.4L613.4 145.5L619.0 146.6L619.4 146.6L624.0 147.5L624.0 433.0Z" fill="url(#g6)"/><path d="M511.8 433.0L511.8 197.0L513.0 185.0L515.5 150.0L516.4 139.0L518.0 118.0L520.3 94.3L522.0 100.0L522.4 100.8L525.0 107.0L527.5 111.0L528.4 112.1L530.5 115.0L534.4 119.7L535.4 121.0L537.0 122.5L540.0 126.0L540.4 126.4L541.4 127.3L546.0 131.0L546.4 131.3L547.4 132.0L552.4 135.1L553.0 135.5L553.4 135.7L558.4 138.3L559.4 138.7L560.0 139.0L564.4 140.8L565.0 141.0L565.4 141.1L570.4 142.7L571.4 142.9L576.4 144.2L577.4 144.4L580.0 145.0L582.4 145.5L583.4 145.7L588.4 146.6L589.4 146.8L594.4 147.6L595.4 147.8L600.0 148.5L600.4 148.6L601.4 148.7L606.4 149.5L607.4 149.7L612.4 150.4L613.4 150.5L618.4 151.2L619.4 151.4L624.0 152.0L624.0 433.0Z" fill="url(#g7)"/><path d="M516.4 433.0L516.4 139.0L518.0 129.7L520.3 119.4L522.0 123.4L522.4 124.0L525.0 128.5L527.5 131.7L528.4 132.6L530.5 134.9L534.4 138.7L535.4 139.7L537.0 140.9L540.0 143.5L540.4 143.8L541.4 144.5L546.0 147.3L546.4 147.5L547.4 148.1L552.4 150.5L553.0 150.8L553.4 150.9L558.4 152.9L559.4 153.3L560.0 153.5L564.4 154.9L565.0 155.1L565.4 155.2L570.4 156.6L571.4 156.8L576.4 157.9L577.4 158.2L580.0 158.7L582.4 159.2L583.4 159.4L588.4 160.3L589.4 160.5L594.4 161.3L595.4 161.5L600.0 162.2L600.4 162.3L601.4 162.5L606.4 163.3L607.4 163.5L612.4 164.3L613.4 164.4L618.4 165.2L619.4 165.3L624.0 166.0L624.0 433.0Z" fill="url(#g8)"/><path d="M516.4 433.0L516.4 139.0L522.4 147.2L525.0 150.0L528.4 153.1L534.4 157.7L540.0 161.0L540.4 161.2L546.4 163.7L552.4 165.8L558.4 167.6L560.0 168.0L564.4 169.1L570.4 170.5L576.4 171.7L582.4 172.9L588.4 173.9L594.4 175.0L600.0 176.0L600.4 176.1L606.4 177.1L612.4 178.1L618.4 179.1L624.0 180.0L624.0 433.0Z" fill="url(#g9)"/><path d="M516.4 433.0L516.4 142.3L522.4 150.2L525.0 153.0L528.4 156.0L534.4 160.7L540.0 164.0L540.4 164.2L546.4 166.7L552.4 168.8L558.4 170.6L560.0 171.0L564.4 172.1L570.4 173.6L576.4 174.9L582.4 176.1L588.4 177.2L594.4 178.3L600.0 179.3L600.4 179.4L606.4 180.5L612.4 181.5L618.4 182.5L624.0 183.3L624.0 433.0Z" fill="url(#g10)"/><path d="M516.4 433.0L516.4 145.6L522.4 153.3L525.0 156.0L528.4 159.0L534.4 163.7L540.0 167.0L540.4 167.2L546.4 169.7L552.4 171.8L558.4 173.5L560.0 174.0L564.4 175.2L570.4 176.6L576.4 178.0L582.4 179.3L588.4 180.5L594.4 181.6L600.0 182.7L600.4 182.7L606.4 183.8L612.4 184.8L618.4 185.8L624.0 186.7L624.0 433.0Z" fill="url(#g11)"/><path d="M515.7 433.0L515.7 148.0L521.7 155.5L525.0 159.0L527.7 161.4L533.7 166.2L539.7 169.8L540.0 170.0L545.7 172.4L551.7 174.5L557.7 176.3L560.0 177.0L563.7 178.0L569.7 179.5L575.7 181.0L581.7 182.3L587.7 183.6L593.7 184.8L599.7 185.9L600.0 186.0L605.7 187.0L611.7 188.1L617.7 189.0L623.7 190.0L624.0 190.0L624.0 433.0Z" fill="url(#g12)"/><path d="M515.7 433.0L515.7 156.9L521.7 164.9L525.0 168.5L527.7 170.9L533.7 175.7L539.7 179.3L540.0 179.5L545.7 182.1L551.7 184.4L557.7 186.3L560.0 187.0L563.7 188.0L569.7 189.6L575.7 191.0L581.7 192.3L587.7 193.5L593.7 194.7L599.7 195.9L600.0 196.0L605.7 197.1L611.7 198.3L617.7 199.4L623.7 200.4L624.0 200.5L624.0 433.0Z" fill="url(#g13)"/><path d="M514.5 433.0L514.5 164.0L520.5 172.8L525.0 178.0L526.5 179.4L532.5 184.3L538.5 188.2L540.0 189.0L544.5 191.2L550.5 193.8L556.5 195.9L560.0 197.0L562.5 197.7L568.5 199.3L574.5 200.7L580.5 202.0L586.5 203.2L592.5 204.4L598.5 205.7L600.0 206.0L604.5 207.0L610.5 208.2L616.5 209.5L622.5 210.7L624.0 211.0L624.0 433.0Z" fill="url(#g14)"/><path d="M514.5 433.0L514.5 167.0L520.5 175.6L525.0 180.7L526.5 182.1L532.5 186.9L538.5 190.7L540.0 191.5L544.5 193.7L550.5 196.2L556.5 198.2L560.0 199.3L562.5 200.1L568.5 201.7L574.5 203.1L580.5 204.4L586.5 205.7L592.5 206.9L598.5 208.2L600.0 208.5L604.5 209.4L610.5 210.7L616.5 211.9L622.5 213.0L624.0 213.3L624.0 433.0Z" fill="url(#g15)"/><path d="M514.5 433.0L514.5 169.9L520.5 178.4L525.0 183.3L526.5 184.7L532.5 189.5L538.5 193.2L540.0 194.0L544.5 196.1L550.5 198.5L556.5 200.6L560.0 201.7L562.5 202.4L568.5 204.0L574.5 205.5L580.5 206.9L586.5 208.2L592.5 209.4L598.5 210.7L600.0 211.0L604.5 211.9L610.5 213.1L616.5 214.3L622.5 215.4L624.0 215.7L624.0 433.0Z" fill="url(#g16)"/><path d="M513.9 433.0L513.9 172.0L519.9 180.4L525.0 186.0L525.9 186.8L531.9 191.6L537.9 195.4L540.0 196.5L543.9 198.3L549.9 200.7L555.9 202.8L560.0 204.0L561.9 204.6L567.9 206.2L573.9 207.8L579.9 209.2L585.9 210.5L591.9 211.8L597.9 213.1L600.0 213.5L603.9 214.3L609.9 215.5L615.9 216.6L621.9 217.6L624.0 218.0L624.0 433.0Z" fill="url(#g17)"/><path d="M513.9 433.0L513.9 174.2L519.9 182.5L525.0 188.0L525.9 188.8L531.9 193.5L537.9 197.2L540.0 198.2L543.9 200.1L549.9 202.5L555.9 204.5L560.0 205.8L561.9 206.3L567.9 208.0L573.9 209.5L579.9 210.9L585.9 212.3L591.9 213.6L597.9 214.8L600.0 215.2L603.9 216.1L609.9 217.2L615.9 218.3L621.9 219.4L624.0 219.8L624.0 433.0Z" fill="url(#g18)"/><path d="M513.6 433.0L513.6 176.0L517.0 180.8L519.6 184.3L522.0 187.0L523.0 188.1L525.0 190.0L525.6 190.6L529.0 193.3L530.0 194.0L531.6 195.2L535.0 197.3L537.6 198.8L540.0 200.0L541.0 200.5L543.6 201.7L545.0 202.3L547.0 203.1L549.6 204.1L553.0 205.3L555.6 206.2L559.0 207.2L560.0 207.5L561.6 208.0L565.0 208.9L567.6 209.7L571.0 210.5L573.6 211.2L577.0 212.0L579.6 212.6L580.0 212.7L583.0 213.4L585.6 214.0L589.0 214.7L591.6 215.3L595.0 216.0L597.6 216.5L600.0 217.0L601.0 217.2L603.6 217.7L607.0 218.4L609.6 218.9L613.0 219.6L615.6 220.0L619.0 220.6L621.6 221.1L624.0 221.5L624.0 433.0Z" fill="url(#g19)"/><path d="M513.6 433.0L513.6 188.9L517.0 191.6L519.6 193.9L522.0 195.8L523.0 196.5L525.0 197.9L525.6 198.3L529.0 200.4L530.0 201.0L531.6 201.9L535.0 203.7L537.6 205.0L540.0 206.1L541.0 206.5L543.6 207.6L545.0 208.1L547.0 208.8L549.6 209.7L553.0 210.7L555.6 211.5L559.0 212.5L560.0 212.8L561.6 213.2L565.0 214.2L567.6 214.9L571.0 215.8L573.6 216.5L577.0 217.4L579.6 218.0L580.0 218.1L583.0 218.8L585.6 219.4L589.0 220.1L591.6 220.7L595.0 221.4L597.6 222.0L600.0 222.5L601.0 222.7L603.6 223.3L607.0 224.0L609.6 224.5L613.0 225.2L615.6 225.7L619.0 226.3L621.6 226.8L624.0 227.2L624.0 433.0Z" fill="url(#g20)"/><path d="M412.4 433.0L412.4 214.0L412.5 185.0L414.5 171.5L418.0 176.0L424.0 182.3L424.5 188.2L427.0 189.0L430.0 189.9L436.0 191.8L440.0 193.0L442.0 193.4L448.0 194.6L454.0 195.8L460.0 197.0L466.0 197.8L470.0 198.3L472.0 198.6L475.0 199.0L478.0 199.1L484.0 199.4L490.0 199.7L496.0 199.9L498.0 200.0L502.0 200.9L504.6 201.5L505.0 200.0L508.0 200.5L510.0 200.8L511.0 201.0L512.0 201.5L514.0 201.9L517.0 202.5L520.0 203.7L522.0 204.5L523.0 204.9L526.0 206.2L529.0 207.6L530.0 208.0L532.0 208.8L535.0 210.1L538.0 211.4L541.0 212.6L544.0 213.7L545.0 214.0L547.0 214.6L550.0 215.4L553.0 216.2L556.0 217.0L559.0 217.7L560.0 218.0L562.0 218.5L565.0 219.4L568.0 220.2L571.0 221.1L574.0 221.9L577.0 222.7L580.0 223.5L583.0 224.2L586.0 224.9L589.0 225.6L592.0 226.3L595.0 226.9L598.0 227.6L600.0 228.0L601.0 228.2L604.0 228.9L607.0 229.5L610.0 230.1L613.0 230.8L616.0 231.4L619.0 232.0L622.0 232.6L624.0 233.0L624.0 433.0Z" fill="url(#g21)"/><path d="M412.4 433.0L412.4 214.6L412.5 195.3L414.5 186.9L418.0 191.0L424.0 196.2L424.5 200.2L427.0 200.9L430.0 201.8L436.0 203.2L440.0 204.2L442.0 204.5L448.0 205.5L454.0 206.4L460.0 207.4L466.0 208.1L470.0 208.6L472.0 208.8L475.0 209.1L478.0 209.2L484.0 209.5L490.0 209.8L496.0 210.1L498.0 210.2L502.0 210.9L504.6 211.3L505.0 210.3L508.0 210.8L510.0 211.1L511.0 211.2L512.0 211.6L514.0 212.1L517.0 212.8L520.0 213.8L522.0 214.4L523.0 214.8L526.0 215.8L529.0 216.8L530.0 217.1L532.0 217.7L535.0 218.7L538.0 219.6L541.0 220.5L544.0 221.3L545.0 221.6L547.0 222.0L550.0 222.7L553.0 223.3L556.0 223.9L559.0 224.5L560.0 224.7L562.0 225.1L565.0 225.8L568.0 226.4L571.0 227.1L574.0 227.7L577.0 228.4L580.0 229.0L583.0 229.6L586.0 230.1L589.0 230.7L592.0 231.2L595.0 231.8L598.0 232.3L600.0 232.7L601.0 232.8L604.0 233.4L607.0 233.9L610.0 234.5L613.0 235.0L616.0 235.6L619.0 236.1L622.0 236.6L624.0 237.0L624.0 433.0Z" fill="url(#g22)"/><path d="M412.4 433.0L412.4 215.2L412.5 205.7L414.5 202.4L418.0 206.0L424.0 210.1L424.5 212.2L427.0 212.8L430.0 213.6L436.0 214.6L440.0 215.3L442.0 215.6L448.0 216.3L454.0 217.1L460.0 217.8L466.0 218.4L470.0 218.8L472.0 219.0L475.0 219.2L478.0 219.4L484.0 219.6L490.0 219.9L496.0 220.2L498.0 220.3L502.0 220.8L504.6 221.1L505.0 220.7L508.0 221.0L510.0 221.3L511.0 221.4L512.0 221.7L514.0 222.2L517.0 223.0L520.0 223.9L522.0 224.4L523.0 224.6L526.0 225.3L529.0 226.0L530.0 226.2L532.0 226.6L535.0 227.3L538.0 227.9L541.0 228.4L544.0 229.0L545.0 229.1L547.0 229.4L550.0 229.9L553.0 230.3L556.0 230.7L559.0 231.2L560.0 231.3L562.0 231.6L565.0 232.1L568.0 232.6L571.0 233.1L574.0 233.5L577.0 234.0L580.0 234.5L583.0 234.9L586.0 235.3L589.0 235.8L592.0 236.2L595.0 236.6L598.0 237.0L600.0 237.3L601.0 237.5L604.0 237.9L607.0 238.4L610.0 238.8L613.0 239.3L616.0 239.8L619.0 240.2L622.0 240.7L624.0 241.0L624.0 433.0Z" fill="url(#g23)"/><path d="M387.6 433.0L387.6 226.5L387.7 201.0L393.6 204.2L395.0 205.0L399.6 207.9L400.0 208.1L403.0 210.0L405.6 211.3L411.5 214.3L411.6 214.5L412.5 216.0L417.6 220.6L418.0 221.0L423.6 223.8L424.0 224.0L429.6 225.4L430.0 225.5L435.6 226.1L436.0 226.1L441.6 226.6L442.0 226.7L447.6 227.2L448.0 227.2L453.6 227.7L454.0 227.7L459.6 228.2L460.0 228.2L465.6 228.7L466.0 228.7L470.0 229.0L471.6 229.1L472.0 229.1L477.6 229.5L478.0 229.5L483.6 229.8L484.0 229.8L489.6 230.0L490.0 230.0L495.6 230.3L496.0 230.4L501.6 230.7L502.0 230.8L507.6 231.2L508.0 231.3L510.0 231.5L513.6 232.3L514.0 232.4L519.6 233.9L520.0 234.0L525.6 234.8L526.0 234.8L531.6 235.5L532.0 235.5L537.6 236.1L538.0 236.1L543.6 236.6L544.0 236.6L549.6 237.1L550.0 237.1L555.6 237.6L556.0 237.6L560.0 238.0L561.6 238.2L562.0 238.2L567.6 238.7L568.0 238.8L573.6 239.3L574.0 239.4L579.6 239.9L580.0 239.9L585.6 240.5L586.0 240.5L591.6 241.1L592.0 241.1L597.6 241.7L598.0 241.8L600.0 242.0L603.6 242.4L604.0 242.5L609.6 243.1L610.0 243.2L615.6 243.9L616.0 243.9L621.6 244.7L622.0 244.7L624.0 245.0L624.0 433.0Z" fill="url(#g24)"/><path d="M307.7 433.0L307.7 246.0L307.8 170.0L308.9 138.4L309.0 140.2L310.0 158.0L311.0 169.7L312.0 173.1L314.0 180.0L318.0 188.0L323.0 196.0L324.0 197.2L326.0 199.5L329.4 203.5L330.0 204.1L336.0 210.0L337.0 211.0L342.0 215.3L346.4 219.0L348.0 219.5L352.4 220.6L354.0 221.0L358.4 222.0L360.0 222.3L362.0 222.7L364.4 223.2L366.0 223.5L370.4 224.3L372.0 224.6L374.0 225.0L376.4 225.4L378.0 225.7L382.4 226.4L384.0 226.7L386.5 227.0L388.4 227.2L390.0 227.4L394.4 227.9L396.0 228.1L400.0 228.5L400.4 228.5L402.0 228.7L406.4 229.3L408.0 229.5L412.4 230.0L414.0 230.2L418.4 230.8L420.0 231.0L424.4 231.5L426.0 231.6L430.0 232.0L430.4 232.0L432.0 232.2L436.4 232.5L438.0 232.6L442.4 232.9L444.0 233.0L448.4 233.3L450.0 233.4L454.4 233.6L456.0 233.7L460.4 233.9L462.0 234.0L466.4 234.3L468.0 234.4L470.0 234.5L472.4 234.6L474.0 234.7L478.4 235.0L480.0 235.0L484.4 235.2L486.0 235.3L490.4 235.5L492.0 235.6L496.4 235.8L498.0 235.9L500.0 236.1L502.4 236.3L504.0 236.4L508.4 236.8L510.0 237.0L514.4 238.0L516.0 238.5L520.0 239.5L520.4 239.6L522.0 239.7L526.4 240.2L528.0 240.4L532.4 240.7L534.0 240.9L538.4 241.1L540.0 241.2L544.4 241.5L546.0 241.6L550.4 241.8L552.0 241.9L556.4 242.2L558.0 242.3L560.0 242.5L562.4 242.7L564.0 242.8L568.4 243.2L570.0 243.3L574.4 243.6L576.0 243.8L580.4 244.1L582.0 244.3L586.4 244.6L588.0 244.8L592.4 245.2L594.0 245.4L598.4 245.8L600.0 246.0L604.4 246.5L606.0 246.7L610.4 247.3L612.0 247.6L616.4 248.3L618.0 248.5L622.4 249.2L624.0 249.5L624.0 433.0Z" fill="url(#g25)"/><path d="M307.7 433.0L307.7 246.5L307.8 189.5L308.9 166.7L309.0 168.1L310.0 181.9L311.0 191.1L312.0 194.1L314.0 199.7L318.0 206.5L323.0 213.2L324.0 214.2L326.0 216.1L329.4 219.4L330.0 219.8L336.0 224.6L337.0 225.4L342.0 228.8L346.4 231.8L348.0 232.1L352.4 233.1L354.0 233.4L358.4 234.1L360.0 234.4L362.0 234.7L364.4 235.1L366.0 235.4L370.4 236.0L372.0 236.3L374.0 236.6L376.4 236.9L378.0 237.1L382.4 237.7L384.0 237.9L386.5 238.1L388.4 238.3L390.0 238.5L394.4 238.9L396.0 239.0L400.0 239.4L400.4 239.4L402.0 239.6L406.4 240.0L408.0 240.2L412.4 240.6L414.0 240.8L418.4 241.3L420.0 241.4L424.4 241.8L426.0 242.0L430.0 242.3L430.4 242.3L432.0 242.4L436.4 242.7L438.0 242.8L442.4 243.1L444.0 243.2L448.4 243.4L450.0 243.5L454.4 243.7L456.0 243.8L460.4 244.0L462.0 244.1L466.4 244.4L468.0 244.4L470.0 244.6L472.4 244.7L474.0 244.8L478.4 245.0L480.0 245.1L484.4 245.3L486.0 245.3L490.4 245.5L492.0 245.6L496.4 245.8L498.0 245.9L500.0 246.1L502.4 246.2L504.0 246.3L508.4 246.7L510.0 246.9L514.4 247.7L516.0 248.1L520.0 248.8L520.4 248.9L522.0 249.1L526.4 249.5L528.0 249.6L532.4 249.9L534.0 250.0L538.4 250.3L540.0 250.4L544.4 250.6L546.0 250.7L550.4 251.0L552.0 251.0L556.4 251.3L558.0 251.4L560.0 251.6L562.4 251.7L564.0 251.9L568.4 252.2L570.0 252.3L574.4 252.6L576.0 252.7L580.4 253.0L582.0 253.2L586.4 253.5L588.0 253.6L592.4 254.0L594.0 254.1L598.4 254.5L600.0 254.7L604.4 255.1L606.0 255.3L610.4 255.8L612.0 256.0L616.4 256.6L618.0 256.8L622.4 257.4L624.0 257.6L624.0 433.0Z" fill="url(#g26)"/><path d="M307.7 433.0L307.7 247.0L307.8 209.0L308.9 195.0L309.0 196.1L310.0 205.8L311.0 212.5L312.0 215.1L314.0 219.4L318.0 225.0L323.0 230.4L324.0 231.2L326.0 232.8L329.4 235.2L330.0 235.6L336.0 239.2L337.0 239.8L342.0 242.3L346.4 244.5L348.0 244.8L352.4 245.5L354.0 245.7L358.4 246.3L360.0 246.5L362.0 246.8L364.4 247.1L366.0 247.2L370.4 247.7L372.0 247.9L374.0 248.1L376.4 248.4L378.0 248.5L382.4 248.9L384.0 249.1L386.5 249.3L388.4 249.4L390.0 249.5L394.4 249.9L396.0 250.0L400.0 250.2L400.4 250.3L402.0 250.4L406.4 250.8L408.0 250.9L412.4 251.3L414.0 251.4L418.4 251.7L420.0 251.9L424.4 252.2L426.0 252.3L430.0 252.6L430.4 252.6L432.0 252.7L436.4 252.9L438.0 253.0L442.4 253.3L444.0 253.3L448.4 253.6L450.0 253.6L454.4 253.9L456.0 253.9L460.4 254.1L462.0 254.2L466.4 254.4L468.0 254.5L470.0 254.6L472.4 254.7L474.0 254.8L478.4 255.0L480.0 255.1L484.4 255.3L486.0 255.4L490.4 255.6L492.0 255.6L496.4 255.8L498.0 255.9L500.0 256.0L502.4 256.2L504.0 256.3L508.4 256.6L510.0 256.7L514.4 257.3L516.0 257.6L520.0 258.2L520.4 258.2L522.0 258.4L526.4 258.7L528.0 258.8L532.4 259.1L534.0 259.2L538.4 259.4L540.0 259.5L544.4 259.8L546.0 259.8L550.4 260.1L552.0 260.2L556.4 260.4L558.0 260.5L560.0 260.6L562.4 260.8L564.0 260.9L568.4 261.2L570.0 261.3L574.4 261.6L576.0 261.7L580.4 261.9L582.0 262.1L586.4 262.4L588.0 262.5L592.4 262.8L594.0 262.9L598.4 263.2L600.0 263.4L604.4 263.8L606.0 263.9L610.4 264.3L612.0 264.5L616.4 264.9L618.0 265.1L622.4 265.6L624.0 265.8L624.0 433.0Z" fill="url(#g27)"/><path d="M307.7 433.0L307.7 247.4L307.8 228.5L308.9 223.3L309.0 224.0L310.0 229.8L311.0 233.9L312.0 236.0L314.0 239.2L318.0 243.5L323.0 247.6L324.0 248.2L326.0 249.4L329.4 251.1L330.0 251.3L336.0 253.7L337.0 254.1L342.0 255.9L346.4 257.2L348.0 257.4L352.4 257.9L354.0 258.1L358.4 258.5L360.0 258.6L362.0 258.8L364.4 259.0L366.0 259.1L370.4 259.4L372.0 259.5L374.0 259.7L376.4 259.8L378.0 259.9L382.4 260.2L384.0 260.3L386.5 260.4L388.4 260.5L390.0 260.6L394.4 260.8L396.0 260.9L400.0 261.1L400.4 261.1L402.0 261.2L406.4 261.5L408.0 261.6L412.4 261.9L414.0 262.0L418.4 262.2L420.0 262.3L424.4 262.6L426.0 262.7L430.0 262.9L430.4 262.9L432.0 263.0L436.4 263.2L438.0 263.2L442.4 263.5L444.0 263.5L448.4 263.7L450.0 263.8L454.4 264.0L456.0 264.1L460.4 264.2L462.0 264.3L466.4 264.5L468.0 264.6L470.0 264.7L472.4 264.8L474.0 264.9L478.4 265.0L480.0 265.1L484.4 265.3L486.0 265.4L490.4 265.6L492.0 265.6L496.4 265.8L498.0 265.9L500.0 266.0L502.4 266.1L504.0 266.2L508.4 266.5L510.0 266.6L514.4 267.0L516.0 267.2L520.0 267.5L520.4 267.6L522.0 267.7L526.4 267.9L528.0 268.0L532.4 268.3L534.0 268.4L538.4 268.6L540.0 268.7L544.4 268.9L546.0 269.0L550.4 269.2L552.0 269.3L556.4 269.5L558.0 269.6L560.0 269.7L562.4 269.8L564.0 269.9L568.4 270.2L570.0 270.3L574.4 270.5L576.0 270.6L580.4 270.9L582.0 270.9L586.4 271.2L588.0 271.3L592.4 271.6L594.0 271.7L598.4 272.0L600.0 272.1L604.4 272.4L606.0 272.5L610.4 272.8L612.0 272.9L616.4 273.3L618.0 273.4L622.4 273.7L624.0 273.9L624.0 433.0Z" fill="url(#g28)"/><path d="M294.0 433.0L294.0 262.5L294.1 236.0L297.0 239.0L300.0 242.0L303.5 245.0L306.5 247.0L307.0 247.4L307.8 248.0L309.0 252.0L310.0 253.7L312.0 257.0L318.0 262.0L324.0 265.3L326.0 266.0L330.0 267.1L336.0 268.3L337.0 268.5L342.0 269.4L346.0 270.0L346.4 270.0L348.0 270.1L354.0 270.5L360.0 270.8L366.0 271.0L372.0 271.2L378.0 271.3L384.0 271.5L390.0 271.7L396.0 271.9L400.0 272.0L402.0 272.1L408.0 272.3L414.0 272.5L420.0 272.8L426.0 273.0L432.0 273.2L438.0 273.5L444.0 273.7L450.0 273.9L456.0 274.2L462.0 274.4L468.0 274.7L474.0 274.9L480.0 275.1L486.0 275.4L492.0 275.7L498.0 275.9L500.0 276.0L504.0 276.2L510.0 276.4L516.0 276.7L522.0 277.0L528.0 277.3L534.0 277.5L540.0 277.8L546.0 278.1L552.0 278.4L558.0 278.7L564.0 279.0L570.0 279.2L576.0 279.5L582.0 279.8L588.0 280.1L594.0 280.4L600.0 280.7L606.0 281.1L612.0 281.4L618.0 281.7L624.0 282.0L624.0 433.0Z" fill="url(#g29)"/><path d="M294.0 433.0L294.0 263.0L294.1 245.3L297.0 248.0L300.0 250.7L303.5 253.3L306.5 255.2L307.0 255.6L307.8 256.4L309.0 259.6L310.0 261.1L312.0 263.8L318.0 268.3L324.0 271.3L326.0 272.0L330.0 273.1L336.0 274.2L337.0 274.3L342.0 275.1L346.0 275.6L346.4 275.7L348.0 275.8L354.0 276.4L360.0 277.0L366.0 277.7L372.0 278.2L378.0 278.8L384.0 279.3L390.0 279.8L396.0 280.1L400.0 280.3L402.0 280.4L408.0 280.7L414.0 280.9L420.0 281.2L426.0 281.4L432.0 281.6L438.0 281.8L444.0 282.1L450.0 282.3L456.0 282.5L462.0 282.7L468.0 282.9L474.0 283.1L480.0 283.3L486.0 283.5L492.0 283.7L498.0 283.9L500.0 284.0L504.0 284.1L510.0 284.4L516.0 284.6L522.0 284.8L528.0 285.0L534.0 285.2L540.0 285.5L546.0 285.7L552.0 285.9L558.0 286.2L564.0 286.4L570.0 286.6L576.0 286.8L582.0 287.1L588.0 287.3L594.0 287.5L600.0 287.7L606.0 288.0L612.0 288.2L618.0 288.4L624.0 288.7L624.0 433.0Z" fill="url(#g30)"/><path d="M294.0 433.0L294.0 263.5L294.1 254.7L297.0 257.0L300.0 259.3L303.5 261.7L306.5 263.5L307.0 263.8L307.8 264.7L309.0 267.1L310.0 268.6L312.0 270.5L318.0 274.7L324.0 277.3L326.0 278.0L330.0 279.0L336.0 280.0L337.0 280.2L342.0 280.8L346.0 281.3L346.4 281.4L348.0 281.6L354.0 282.4L360.0 283.3L366.0 284.3L372.0 285.3L378.0 286.3L384.0 287.1L390.0 287.9L396.0 288.4L400.0 288.7L402.0 288.8L408.0 289.0L414.0 289.3L420.0 289.6L426.0 289.8L432.0 290.0L438.0 290.2L444.0 290.4L450.0 290.6L456.0 290.8L462.0 290.9L468.0 291.1L474.0 291.3L480.0 291.4L486.0 291.6L492.0 291.8L498.0 291.9L500.0 292.0L504.0 292.1L510.0 292.3L516.0 292.5L522.0 292.6L528.0 292.8L534.0 293.0L540.0 293.1L546.0 293.3L552.0 293.5L558.0 293.6L564.0 293.8L570.0 294.0L576.0 294.1L582.0 294.3L588.0 294.4L594.0 294.6L600.0 294.8L606.0 294.9L612.0 295.0L618.0 295.2L624.0 295.3L624.0 433.0Z" fill="url(#g31)"/><path d="M258.5 433.0L258.5 287.5L258.6 272.0L261.0 276.0L263.4 277.5L263.5 257.0L264.0 258.5L265.5 263.0L267.6 265.0L267.7 237.0L268.0 238.2L269.0 242.0L270.0 246.0L271.5 239.5L274.0 249.5L275.0 249.8L277.5 250.5L281.0 255.0L285.0 259.5L287.0 260.5L289.0 261.5L292.5 263.0L293.0 263.3L294.1 264.0L299.0 267.3L300.0 268.0L305.0 270.9L307.0 272.0L310.0 276.0L311.0 276.6L317.0 280.4L318.0 281.0L320.0 281.8L323.0 283.0L324.0 283.4L329.0 284.8L330.0 285.0L335.0 285.7L336.0 285.9L341.0 286.4L342.0 286.5L346.0 287.0L347.0 287.1L348.0 287.3L353.0 288.2L354.0 288.4L359.0 289.4L360.0 289.6L365.0 290.8L366.0 291.0L371.0 292.1L372.0 292.4L377.0 293.5L378.0 293.7L383.0 294.7L384.0 294.9L389.0 295.8L390.0 295.9L395.0 296.6L396.0 296.7L400.0 297.0L401.0 297.1L402.0 297.1L407.0 297.4L408.0 297.4L413.0 297.7L414.0 297.7L419.0 297.9L420.0 298.0L425.0 298.2L426.0 298.2L431.0 298.4L432.0 298.4L437.0 298.6L438.0 298.6L443.0 298.7L444.0 298.8L449.0 298.9L450.0 298.9L455.0 299.1L456.0 299.1L461.0 299.2L462.0 299.2L467.0 299.3L468.0 299.3L473.0 299.5L474.0 299.5L479.0 299.6L480.0 299.6L485.0 299.7L486.0 299.7L491.0 299.8L492.0 299.8L497.0 299.9L498.0 300.0L500.0 300.0L503.0 300.1L504.0 300.1L509.0 300.2L510.0 300.2L515.0 300.3L516.0 300.3L521.0 300.4L522.0 300.5L527.0 300.6L528.0 300.6L533.0 300.7L534.0 300.7L539.0 300.8L540.0 300.8L545.0 300.9L546.0 300.9L551.0 301.0L552.0 301.0L557.0 301.1L558.0 301.1L563.0 301.2L564.0 301.2L569.0 301.3L570.0 301.3L575.0 301.4L576.0 301.4L581.0 301.5L582.0 301.5L587.0 301.6L588.0 301.6L593.0 301.7L594.0 301.7L599.0 301.7L600.0 301.8L605.0 301.8L606.0 301.8L611.0 301.9L612.0 301.9L617.0 301.9L618.0 301.9L623.0 302.0L624.0 302.0L624.0 433.0Z" fill="url(#g32)"/><path d="M258.5 433.0L258.5 288.0L258.6 277.7L261.0 280.8L263.4 282.2L263.5 268.6L264.0 269.7L265.5 273.3L267.6 275.5L267.7 256.9L268.0 257.8L269.0 260.5L270.0 263.4L271.5 259.3L274.0 266.5L275.0 266.9L277.5 267.7L281.0 271.2L285.0 274.7L287.0 275.5L289.0 276.4L292.5 277.7L293.0 278.0L294.1 278.5L299.0 281.1L300.0 281.7L305.0 283.9L307.0 284.8L310.0 287.7L311.0 288.1L317.0 290.9L318.0 291.4L320.0 292.1L323.0 293.0L324.0 293.2L329.0 294.4L330.0 294.5L335.0 295.2L336.0 295.3L341.0 295.8L342.0 295.9L346.0 296.3L347.0 296.5L348.0 296.6L353.0 297.3L354.0 297.5L359.0 298.3L360.0 298.4L365.0 299.3L366.0 299.5L371.0 300.4L372.0 300.5L377.0 301.4L378.0 301.6L383.0 302.3L384.0 302.5L389.0 303.2L390.0 303.3L395.0 303.8L396.0 303.9L400.0 304.2L401.0 304.2L402.0 304.3L407.0 304.5L408.0 304.6L413.0 304.8L414.0 304.9L419.0 305.1L420.0 305.2L425.0 305.4L426.0 305.4L431.0 305.6L432.0 305.6L437.0 305.8L438.0 305.9L443.0 306.0L444.0 306.1L449.0 306.2L450.0 306.3L455.0 306.4L456.0 306.5L461.0 306.6L462.0 306.6L467.0 306.8L468.0 306.8L473.0 306.9L474.0 307.0L479.0 307.1L480.0 307.1L485.0 307.3L486.0 307.3L491.0 307.4L492.0 307.5L497.0 307.6L498.0 307.6L500.0 307.7L503.0 307.7L504.0 307.8L509.0 307.9L510.0 307.9L515.0 308.1L516.0 308.1L521.0 308.2L522.0 308.2L527.0 308.4L528.0 308.4L533.0 308.5L534.0 308.5L539.0 308.7L540.0 308.7L545.0 308.8L546.0 308.8L551.0 308.9L552.0 309.0L557.0 309.1L558.0 309.1L563.0 309.2L564.0 309.2L569.0 309.3L570.0 309.4L575.0 309.5L576.0 309.5L581.0 309.6L582.0 309.6L587.0 309.7L588.0 309.7L593.0 309.8L594.0 309.8L599.0 309.9L600.0 310.0L605.0 310.0L606.0 310.1L611.0 310.1L612.0 310.2L617.0 310.2L618.0 310.2L623.0 310.3L624.0 310.3L624.0 433.0Z" fill="url(#g33)"/><path d="M258.5 433.0L258.5 288.5L258.6 283.3L261.0 285.6L263.4 286.9L263.5 280.1L264.0 280.8L265.5 283.6L267.6 286.0L267.7 276.8L268.0 277.4L269.0 279.0L270.0 280.8L271.5 279.2L274.0 283.5L275.0 283.9L277.5 284.9L281.0 287.4L285.0 289.8L287.0 290.6L289.0 291.3L292.5 292.5L293.0 292.7L294.1 293.1L299.0 295.0L300.0 295.3L305.0 297.0L307.0 297.6L310.0 299.3L311.0 299.6L317.0 301.5L318.0 301.8L320.0 302.3L323.0 302.9L324.0 303.1L329.0 303.9L330.0 304.1L335.0 304.6L336.0 304.7L341.0 305.2L342.0 305.3L346.0 305.7L347.0 305.8L348.0 305.9L353.0 306.4L354.0 306.5L359.0 307.1L360.0 307.2L365.0 307.8L366.0 308.0L371.0 308.6L372.0 308.7L377.0 309.3L378.0 309.4L383.0 309.9L384.0 310.0L389.0 310.5L390.0 310.6L395.0 311.0L396.0 311.1L400.0 311.3L401.0 311.4L402.0 311.4L407.0 311.7L408.0 311.8L413.0 312.0L414.0 312.1L419.0 312.3L420.0 312.3L425.0 312.6L426.0 312.6L431.0 312.8L432.0 312.9L437.0 313.1L438.0 313.1L443.0 313.3L444.0 313.4L449.0 313.6L450.0 313.6L455.0 313.8L456.0 313.8L461.0 314.0L462.0 314.1L467.0 314.2L468.0 314.3L473.0 314.4L474.0 314.5L479.0 314.6L480.0 314.7L485.0 314.8L486.0 314.9L491.0 315.0L492.0 315.1L497.0 315.2L498.0 315.3L500.0 315.3L503.0 315.4L504.0 315.5L509.0 315.6L510.0 315.7L515.0 315.8L516.0 315.8L521.0 316.0L522.0 316.0L527.0 316.2L528.0 316.2L533.0 316.4L534.0 316.4L539.0 316.5L540.0 316.6L545.0 316.7L546.0 316.7L551.0 316.9L552.0 316.9L557.0 317.1L558.0 317.1L563.0 317.2L564.0 317.3L569.0 317.4L570.0 317.4L575.0 317.5L576.0 317.6L581.0 317.7L582.0 317.7L587.0 317.8L588.0 317.9L593.0 318.0L594.0 318.0L599.0 318.1L600.0 318.2L605.0 318.3L606.0 318.3L611.0 318.4L612.0 318.4L617.0 318.5L618.0 318.5L623.0 318.6L624.0 318.7L624.0 433.0Z" fill="url(#g34)"/><path d="M215.5 433.0L215.5 316.0L215.6 275.0L217.0 269.5L219.5 278.0L221.5 283.2L222.0 284.5L224.5 272.0L225.8 279.0L227.0 281.0L227.5 279.3L228.5 276.0L232.0 280.0L233.5 280.9L236.0 282.5L239.5 284.2L240.0 284.5L245.5 288.6L246.0 289.0L247.0 286.0L251.5 287.2L252.0 287.3L257.0 288.0L257.5 288.3L258.6 289.0L260.0 289.8L263.5 291.7L264.0 292.0L268.0 297.0L269.5 297.9L275.0 301.0L275.5 301.2L281.0 303.6L281.5 303.8L285.0 305.0L287.0 305.6L287.5 305.8L293.0 307.3L293.5 307.5L299.0 308.8L299.5 308.9L300.0 309.0L305.0 310.0L305.5 310.1L311.0 311.1L311.5 311.2L317.0 312.1L317.5 312.2L320.0 312.5L323.0 312.9L323.5 312.9L329.0 313.5L329.5 313.6L335.0 314.1L335.5 314.1L341.0 314.6L341.5 314.6L346.0 315.0L347.0 315.1L347.5 315.1L350.0 315.3L353.0 315.5L353.5 315.6L359.0 316.0L359.5 316.0L365.0 316.4L365.5 316.4L371.0 316.8L371.5 316.8L377.0 317.2L377.5 317.2L383.0 317.5L383.5 317.6L389.0 317.9L389.5 317.9L395.0 318.2L395.5 318.3L400.0 318.5L401.0 318.6L401.5 318.6L407.0 318.9L407.5 318.9L413.0 319.2L413.5 319.2L419.0 319.5L419.5 319.5L425.0 319.8L425.5 319.8L430.0 320.0L431.0 320.1L431.5 320.1L437.0 320.4L437.5 320.4L443.0 320.6L443.5 320.7L449.0 320.9L449.5 320.9L455.0 321.2L455.5 321.2L461.0 321.4L461.5 321.5L467.0 321.7L467.5 321.7L473.0 321.9L473.5 322.0L479.0 322.2L479.5 322.2L485.0 322.4L485.5 322.4L491.0 322.7L491.5 322.7L497.0 322.9L497.5 322.9L500.0 323.0L503.0 323.1L503.5 323.1L509.0 323.3L509.5 323.4L515.0 323.6L515.5 323.6L520.0 323.7L521.0 323.8L521.5 323.8L527.0 324.0L527.5 324.0L533.0 324.2L533.5 324.2L539.0 324.4L539.5 324.4L545.0 324.6L545.5 324.6L551.0 324.8L551.5 324.8L557.0 325.0L557.5 325.0L563.0 325.2L563.5 325.2L569.0 325.4L569.5 325.4L575.0 325.6L575.5 325.6L581.0 325.8L581.5 325.8L587.0 326.0L587.5 326.0L593.0 326.2L593.5 326.2L599.0 326.3L599.5 326.3L605.0 326.5L605.5 326.5L611.0 326.7L611.5 326.7L617.0 326.8L617.5 326.8L623.0 327.0L623.5 327.0L624.0 327.0L624.0 433.0Z" fill="url(#g35)"/><path d="M215.5 433.0L215.5 316.2L215.6 288.9L217.0 285.3L219.5 291.2L221.5 294.9L222.0 295.8L224.5 287.7L225.8 292.4L227.0 293.9L227.5 292.8L228.5 290.7L232.0 293.6L233.5 294.3L236.0 295.6L239.5 297.0L240.0 297.2L245.5 300.3L246.0 300.6L247.0 298.6L251.5 299.7L252.0 299.8L257.0 300.5L257.5 300.7L258.6 301.3L260.0 301.9L263.5 303.3L264.0 303.5L268.0 307.1L269.5 307.7L275.0 310.1L275.5 310.2L281.0 312.0L281.5 312.2L285.0 313.2L287.0 313.7L287.5 313.8L293.0 315.0L293.5 315.1L299.0 316.2L299.5 316.2L300.0 316.3L305.0 317.2L305.5 317.2L311.0 318.0L311.5 318.1L317.0 318.8L317.5 318.9L320.0 319.2L323.0 319.5L323.5 319.5L329.0 320.0L329.5 320.1L335.0 320.5L335.5 320.5L341.0 320.9L341.5 321.0L346.0 321.3L347.0 321.3L347.5 321.4L350.0 321.5L353.0 321.7L353.5 321.8L359.0 322.1L359.5 322.1L365.0 322.4L365.5 322.5L371.0 322.7L371.5 322.8L377.0 323.1L377.5 323.1L383.0 323.3L383.5 323.4L389.0 323.6L389.5 323.7L395.0 323.9L395.5 323.9L400.0 324.1L401.0 324.2L401.5 324.2L407.0 324.4L407.5 324.4L413.0 324.7L413.5 324.7L419.0 324.9L419.5 324.9L425.0 325.2L425.5 325.2L430.0 325.4L431.0 325.4L431.5 325.4L437.0 325.6L437.5 325.6L443.0 325.9L443.5 325.9L449.0 326.1L449.5 326.1L455.0 326.3L455.5 326.3L461.0 326.5L461.5 326.5L467.0 326.7L467.5 326.8L473.0 327.0L473.5 327.0L479.0 327.2L479.5 327.2L485.0 327.4L485.5 327.4L491.0 327.6L491.5 327.6L497.0 327.8L497.5 327.8L500.0 327.9L503.0 328.0L503.5 328.0L509.0 328.1L509.5 328.2L515.0 328.3L515.5 328.4L520.0 328.5L521.0 328.5L521.5 328.5L527.0 328.7L527.5 328.7L533.0 328.9L533.5 328.9L539.0 329.1L539.5 329.1L545.0 329.3L545.5 329.3L551.0 329.4L551.5 329.4L557.0 329.6L557.5 329.6L563.0 329.8L563.5 329.8L569.0 329.9L569.5 330.0L575.0 330.1L575.5 330.1L581.0 330.3L581.5 330.3L587.0 330.4L587.5 330.4L593.0 330.6L593.5 330.6L599.0 330.7L599.5 330.7L605.0 330.9L605.5 330.9L611.0 331.0L611.5 331.0L617.0 331.2L617.5 331.2L623.0 331.3L623.5 331.3L624.0 331.3L624.0 433.0Z" fill="url(#g36)"/><path d="M215.5 433.0L215.5 316.4L215.6 302.8L217.0 301.2L219.5 304.5L221.5 306.6L222.0 307.1L224.5 303.3L225.8 305.9L227.0 306.7L227.5 306.3L228.5 305.3L232.0 307.2L233.5 307.7L236.0 308.6L239.5 309.7L240.0 309.8L245.5 311.9L246.0 312.1L247.0 311.2L251.5 312.2L252.0 312.3L257.0 313.0L257.5 313.2L258.6 313.5L260.0 313.9L263.5 314.9L264.0 315.1L268.0 317.1L269.5 317.5L275.0 319.1L275.5 319.2L281.0 320.5L281.5 320.6L285.0 321.3L287.0 321.7L287.5 321.8L293.0 322.7L293.5 322.8L299.0 323.5L299.5 323.6L300.0 323.7L305.0 324.3L305.5 324.3L311.0 325.0L311.5 325.0L317.0 325.5L317.5 325.6L320.0 325.8L323.0 326.1L323.5 326.1L329.0 326.5L329.5 326.6L335.0 326.9L335.5 327.0L341.0 327.3L341.5 327.3L346.0 327.6L347.0 327.6L347.5 327.6L350.0 327.8L353.0 327.9L353.5 327.9L359.0 328.2L359.5 328.2L365.0 328.5L365.5 328.5L371.0 328.7L371.5 328.7L377.0 328.9L377.5 329.0L383.0 329.2L383.5 329.2L389.0 329.4L389.5 329.4L395.0 329.6L395.5 329.6L400.0 329.7L401.0 329.8L401.5 329.8L407.0 330.0L407.5 330.0L413.0 330.1L413.5 330.2L419.0 330.3L419.5 330.3L425.0 330.5L425.5 330.5L430.0 330.7L431.0 330.7L431.5 330.7L437.0 330.9L437.5 330.9L443.0 331.1L443.5 331.1L449.0 331.3L449.5 331.3L455.0 331.4L455.5 331.5L461.0 331.6L461.5 331.6L467.0 331.8L467.5 331.8L473.0 332.0L473.5 332.0L479.0 332.1L479.5 332.2L485.0 332.3L485.5 332.3L491.0 332.5L491.5 332.5L497.0 332.6L497.5 332.7L500.0 332.7L503.0 332.8L503.5 332.8L509.0 333.0L509.5 333.0L515.0 333.1L515.5 333.1L520.0 333.2L521.0 333.3L521.5 333.3L527.0 333.4L527.5 333.4L533.0 333.6L533.5 333.6L539.0 333.7L539.5 333.7L545.0 333.9L545.5 333.9L551.0 334.0L551.5 334.0L557.0 334.2L557.5 334.2L563.0 334.3L563.5 334.3L569.0 334.5L569.5 334.5L575.0 334.6L575.5 334.6L581.0 334.7L581.5 334.8L587.0 334.9L587.5 334.9L593.0 335.0L593.5 335.0L599.0 335.1L599.5 335.2L605.0 335.3L605.5 335.3L611.0 335.4L611.5 335.4L617.0 335.5L617.5 335.5L623.0 335.6L623.5 335.7L624.0 335.7L624.0 433.0Z" fill="url(#g37)"/><path d="M167.8 433.0L167.8 421.0L167.8 319.5L170.5 333.0L173.6 346.0L174.2 330.0L176.0 285.0L177.4 216.0L178.5 238.0L180.0 257.0L183.0 272.0L186.0 281.0L190.0 291.0L198.0 303.0L205.0 310.0L213.0 315.5L215.0 316.5L221.0 318.1L227.0 319.6L233.0 321.0L239.0 322.3L240.0 322.5L245.0 323.5L251.0 324.6L257.0 325.5L260.0 326.0L263.0 326.4L269.0 327.3L275.0 328.2L281.0 329.0L287.0 329.7L293.0 330.4L299.0 330.9L300.0 331.0L305.0 331.4L311.0 331.9L317.0 332.3L323.0 332.7L329.0 333.0L335.0 333.3L341.0 333.6L347.0 333.9L350.0 334.0L353.0 334.1L359.0 334.3L365.0 334.5L371.0 334.7L377.0 334.8L383.0 335.0L389.0 335.1L395.0 335.2L401.0 335.4L407.0 335.5L413.0 335.6L419.0 335.8L425.0 335.9L430.0 336.0L431.0 336.0L437.0 336.2L443.0 336.3L449.0 336.4L455.0 336.6L461.0 336.7L467.0 336.9L473.0 337.0L479.0 337.1L485.0 337.3L491.0 337.4L497.0 337.5L503.0 337.6L509.0 337.8L515.0 337.9L520.0 338.0L521.0 338.0L527.0 338.1L533.0 338.3L539.0 338.4L545.0 338.5L551.0 338.6L557.0 338.7L563.0 338.9L569.0 339.0L575.0 339.1L581.0 339.2L587.0 339.3L593.0 339.4L599.0 339.5L605.0 339.7L611.0 339.8L617.0 339.9L623.0 340.0L624.0 340.0L624.0 433.0Z" fill="url(#g38)"/><path d="M167.8 433.0L167.8 421.6L167.8 325.0L170.5 337.8L173.6 350.2L174.2 335.0L176.0 292.1L177.4 226.5L178.5 247.4L180.0 265.5L183.0 279.8L186.0 288.3L190.0 297.9L198.0 309.3L205.0 315.9L213.0 321.2L215.0 322.1L221.0 323.7L227.0 325.1L233.0 326.4L239.0 327.7L240.0 327.9L245.0 328.8L251.0 329.9L257.0 330.8L260.0 331.2L263.0 331.7L269.0 332.5L275.0 333.2L281.0 333.9L287.0 334.6L293.0 335.2L299.0 335.7L300.0 335.8L305.0 336.1L311.0 336.5L317.0 336.9L323.0 337.2L329.0 337.5L335.0 337.8L341.0 338.1L347.0 338.3L350.0 338.4L353.0 338.5L359.0 338.6L365.0 338.8L371.0 338.9L377.0 339.1L383.0 339.2L389.0 339.3L395.0 339.4L401.0 339.5L407.0 339.6L413.0 339.7L419.0 339.8L425.0 339.9L430.0 340.0L431.0 340.0L437.0 340.1L443.0 340.2L449.0 340.3L455.0 340.4L461.0 340.5L467.0 340.6L473.0 340.7L479.0 340.8L485.0 340.9L491.0 341.0L497.0 341.1L503.0 341.2L509.0 341.3L515.0 341.4L520.0 341.5L521.0 341.5L527.0 341.6L533.0 341.7L539.0 341.8L545.0 341.9L551.0 342.0L557.0 342.1L563.0 342.2L569.0 342.3L575.0 342.4L581.0 342.5L587.0 342.6L593.0 342.6L599.0 342.7L605.0 342.8L611.0 342.9L617.0 343.0L623.0 343.1L624.0 343.1L624.0 433.0Z" fill="url(#g39)"/><path d="M167.8 433.0L167.8 422.2L167.8 330.5L170.5 342.7L173.6 354.4L174.2 339.9L176.0 299.3L177.4 237.0L178.5 256.8L180.0 274.0L183.0 287.5L186.0 295.7L190.0 304.7L198.0 315.6L205.0 321.9L213.0 326.8L215.0 327.8L221.0 329.2L227.0 330.6L233.0 331.9L239.0 333.1L240.0 333.2L245.0 334.2L251.0 335.2L257.0 336.1L260.0 336.5L263.0 336.9L269.0 337.6L275.0 338.3L281.0 338.9L287.0 339.5L293.0 340.0L299.0 340.4L300.0 340.5L305.0 340.8L311.0 341.2L317.0 341.5L323.0 341.8L329.0 342.0L335.0 342.3L341.0 342.5L347.0 342.7L350.0 342.8L353.0 342.8L359.0 343.0L365.0 343.1L371.0 343.2L377.0 343.3L383.0 343.4L389.0 343.5L395.0 343.6L401.0 343.6L407.0 343.7L413.0 343.8L419.0 343.9L425.0 343.9L430.0 344.0L431.0 344.0L437.0 344.1L443.0 344.2L449.0 344.2L455.0 344.3L461.0 344.4L467.0 344.4L473.0 344.5L479.0 344.6L485.0 344.6L491.0 344.7L497.0 344.8L503.0 344.8L509.0 344.9L515.0 344.9L520.0 345.0L521.0 345.0L527.0 345.1L533.0 345.1L539.0 345.2L545.0 345.3L551.0 345.3L557.0 345.4L563.0 345.5L569.0 345.6L575.0 345.6L581.0 345.7L587.0 345.8L593.0 345.9L599.0 345.9L605.0 346.0L611.0 346.1L617.0 346.2L623.0 346.2L624.0 346.2L624.0 433.0Z" fill="url(#g40)"/><path d="M167.8 433.0L167.8 422.7L167.8 335.9L170.5 347.5L173.6 358.6L174.2 344.9L176.0 306.4L177.4 247.4L178.5 266.2L180.0 282.5L183.0 295.3L186.0 303.0L190.0 311.6L198.0 321.8L205.0 327.8L213.0 332.5L215.0 333.4L221.0 334.8L227.0 336.1L233.0 337.3L239.0 338.4L240.0 338.6L245.0 339.5L251.0 340.5L257.0 341.4L260.0 341.8L263.0 342.1L269.0 342.7L275.0 343.3L281.0 343.9L287.0 344.4L293.0 344.8L299.0 345.2L300.0 345.2L305.0 345.5L311.0 345.8L317.0 346.1L323.0 346.3L329.0 346.6L335.0 346.8L341.0 346.9L347.0 347.1L350.0 347.1L353.0 347.2L359.0 347.3L365.0 347.4L371.0 347.4L377.0 347.5L383.0 347.6L389.0 347.7L395.0 347.7L401.0 347.8L407.0 347.8L413.0 347.9L419.0 347.9L425.0 348.0L430.0 348.0L431.0 348.0L437.0 348.0L443.0 348.1L449.0 348.1L455.0 348.1L461.0 348.2L467.0 348.2L473.0 348.2L479.0 348.3L485.0 348.3L491.0 348.3L497.0 348.4L503.0 348.4L509.0 348.4L515.0 348.5L520.0 348.5L521.0 348.5L527.0 348.5L533.0 348.6L539.0 348.6L545.0 348.7L551.0 348.7L557.0 348.7L563.0 348.8L569.0 348.8L575.0 348.9L581.0 349.0L587.0 349.0L593.0 349.1L599.0 349.1L605.0 349.2L611.0 349.2L617.0 349.3L623.0 349.4L624.0 349.4L624.0 433.0Z" fill="url(#g41)"/><path d="M167.8 433.0L167.8 423.3L167.8 341.4L170.5 352.3L173.6 362.8L174.2 349.9L176.0 313.6L177.4 257.9L178.5 275.7L180.0 291.0L183.0 303.1L186.0 310.4L190.0 318.4L198.0 328.1L205.0 333.8L213.0 338.2L215.0 339.0L221.0 340.3L227.0 341.6L233.0 342.7L239.0 343.8L240.0 344.0L245.0 344.9L251.0 345.8L257.0 346.7L260.0 347.0L263.0 347.3L269.0 347.9L275.0 348.4L281.0 348.9L287.0 349.3L293.0 349.7L299.0 350.0L300.0 350.0L305.0 350.2L311.0 350.5L317.0 350.7L323.0 350.9L329.0 351.1L335.0 351.2L341.0 351.4L347.0 351.5L350.0 351.5L353.0 351.5L359.0 351.6L365.0 351.7L371.0 351.7L377.0 351.8L383.0 351.8L389.0 351.9L395.0 351.9L401.0 351.9L407.0 352.0L413.0 352.0L419.0 352.0L425.0 352.0L430.0 352.0L431.0 352.0L437.0 352.0L443.0 352.0L449.0 352.0L455.0 352.0L461.0 352.0L467.0 352.0L473.0 352.0L479.0 352.0L485.0 352.0L491.0 352.0L497.0 352.0L503.0 352.0L509.0 352.0L515.0 352.0L520.0 352.0L521.0 352.0L527.0 352.0L533.0 352.0L539.0 352.0L545.0 352.0L551.0 352.1L557.0 352.1L563.0 352.1L569.0 352.1L575.0 352.2L581.0 352.2L587.0 352.2L593.0 352.3L599.0 352.3L605.0 352.4L611.0 352.4L617.0 352.4L623.0 352.5L624.0 352.5L624.0 433.0Z" fill="url(#g42)"/><path d="M167.8 433.0L167.8 423.6L167.8 343.9L170.5 354.5L173.6 364.7L174.2 352.1L176.0 316.8L177.4 262.6L178.5 279.8L180.0 294.8L183.0 306.5L186.0 313.6L190.0 321.5L198.0 330.9L205.0 336.4L213.0 340.7L215.0 341.5L221.0 343.0L227.0 344.3L233.0 345.6L239.0 346.8L240.0 347.0L245.0 347.9L251.0 349.0L257.0 349.9L260.0 350.2L263.0 350.6L269.0 351.1L275.0 351.7L281.0 352.1L287.0 352.6L293.0 352.9L299.0 353.2L300.0 353.2L305.0 353.5L311.0 353.7L317.0 353.9L323.0 354.1L329.0 354.3L335.0 354.5L341.0 354.6L347.0 354.7L350.0 354.8L353.0 354.8L359.0 354.8L365.0 354.9L371.0 355.0L377.0 355.0L383.0 355.1L389.0 355.1L395.0 355.1L401.0 355.2L407.0 355.2L413.0 355.2L419.0 355.2L425.0 355.2L430.0 355.2L431.0 355.2L437.0 355.2L443.0 355.2L449.0 355.2L455.0 355.2L461.0 355.2L467.0 355.2L473.0 355.2L479.0 355.2L485.0 355.2L491.0 355.2L497.0 355.2L503.0 355.2L509.0 355.2L515.0 355.2L520.0 355.2L521.0 355.3L527.0 355.3L533.0 355.3L539.0 355.3L545.0 355.3L551.0 355.3L557.0 355.3L563.0 355.4L569.0 355.4L575.0 355.4L581.0 355.5L587.0 355.5L593.0 355.5L599.0 355.6L605.0 355.6L611.0 355.7L617.0 355.7L623.0 355.7L624.0 355.8L624.0 433.0Z" fill="url(#g43)"/><path d="M167.8 433.0L167.8 423.8L167.8 346.3L170.5 356.6L173.6 366.5L174.2 354.3L176.0 319.9L177.4 267.2L178.5 284.0L180.0 298.5L183.0 310.0L186.0 316.9L190.0 324.5L198.0 333.7L205.0 339.0L213.0 343.2L215.0 344.0L221.0 345.6L227.0 347.1L233.0 348.5L239.0 349.8L240.0 350.0L245.0 351.0L251.0 352.2L257.0 353.1L260.0 353.5L263.0 353.8L269.0 354.4L275.0 354.9L281.0 355.4L287.0 355.8L293.0 356.2L299.0 356.5L300.0 356.5L305.0 356.7L311.0 357.0L317.0 357.2L323.0 357.4L329.0 357.6L335.0 357.7L341.0 357.9L347.0 358.0L350.0 358.0L353.0 358.0L359.0 358.1L365.0 358.2L371.0 358.2L377.0 358.3L383.0 358.3L389.0 358.4L395.0 358.4L401.0 358.4L407.0 358.5L413.0 358.5L419.0 358.5L425.0 358.5L430.0 358.5L431.0 358.5L437.0 358.5L443.0 358.5L449.0 358.5L455.0 358.5L461.0 358.5L467.0 358.5L473.0 358.5L479.0 358.5L485.0 358.5L491.0 358.5L497.0 358.5L503.0 358.5L509.0 358.5L515.0 358.5L520.0 358.5L521.0 358.5L527.0 358.5L533.0 358.5L539.0 358.5L545.0 358.5L551.0 358.6L557.0 358.6L563.0 358.6L569.0 358.6L575.0 358.7L581.0 358.7L587.0 358.7L593.0 358.8L599.0 358.8L605.0 358.9L611.0 358.9L617.0 358.9L623.0 359.0L624.0 359.0L624.0 433.0Z" fill="url(#g44)"/><path d="M167.8 433.0L167.8 424.2L167.8 350.2L170.5 360.0L173.6 369.5L174.2 357.8L176.0 325.0L177.4 274.7L178.5 290.7L180.0 304.6L183.0 315.5L186.0 322.1L190.0 329.4L198.0 338.2L205.0 343.3L213.0 347.3L215.0 348.0L221.0 349.8L227.0 351.4L233.0 352.9L239.0 354.3L240.0 354.5L245.0 355.5L251.0 356.6L257.0 357.6L260.0 358.0L263.0 358.4L269.0 359.0L275.0 359.7L281.0 360.2L287.0 360.7L293.0 361.1L299.0 361.5L300.0 361.5L305.0 361.7L311.0 362.0L317.0 362.2L323.0 362.4L329.0 362.5L335.0 362.7L341.0 362.8L347.0 362.9L350.0 363.0L353.0 363.1L359.0 363.2L365.0 363.3L371.0 363.4L377.0 363.5L383.0 363.6L389.0 363.7L395.0 363.8L401.0 363.8L407.0 363.9L413.0 363.9L419.0 364.0L425.0 364.0L430.0 364.0L431.0 364.0L437.0 364.0L443.0 364.0L449.0 364.0L455.0 364.0L461.0 364.0L467.0 364.0L473.0 364.0L479.0 364.0L485.0 364.0L491.0 364.0L497.0 364.0L503.0 364.0L509.0 364.0L515.0 364.0L520.0 364.0L521.0 364.0L527.0 364.0L533.0 364.0L539.0 364.0L545.0 364.0L551.0 364.1L557.0 364.1L563.0 364.1L569.0 364.1L575.0 364.2L581.0 364.2L587.0 364.2L593.0 364.3L599.0 364.3L605.0 364.4L611.0 364.4L617.0 364.4L623.0 364.5L624.0 364.5L624.0 433.0Z" fill="url(#g45)"/><path d="M167.8 433.0L167.8 424.5L167.8 352.1L170.5 361.8L173.6 371.0L174.2 359.6L176.0 327.6L177.4 278.4L178.5 294.1L180.0 307.6L183.0 318.3L186.0 324.7L190.0 331.8L198.0 340.4L205.0 345.4L213.0 349.3L215.0 350.0L221.0 351.8L227.0 353.5L233.0 355.1L239.0 356.5L240.0 356.8L245.0 357.8L251.0 359.0L257.0 360.1L260.0 360.5L263.0 360.9L269.0 361.6L275.0 362.3L281.0 362.9L287.0 363.4L293.0 363.8L299.0 364.2L300.0 364.2L305.0 364.5L311.0 364.8L317.0 365.0L323.0 365.3L329.0 365.5L335.0 365.6L341.0 365.8L347.0 365.9L350.0 366.0L353.0 366.1L359.0 366.2L365.0 366.3L371.0 366.4L377.0 366.5L383.0 366.6L389.0 366.6L395.0 366.7L401.0 366.8L407.0 366.8L413.0 366.9L419.0 366.9L425.0 367.0L430.0 367.0L431.0 367.0L437.0 367.0L443.0 367.0L449.0 367.1L455.0 367.1L461.0 367.1L467.0 367.1L473.0 367.1L479.0 367.1L485.0 367.2L491.0 367.2L497.0 367.2L503.0 367.2L509.0 367.2L515.0 367.2L520.0 367.2L521.0 367.3L527.0 367.3L533.0 367.3L539.0 367.3L545.0 367.3L551.0 367.4L557.0 367.4L563.0 367.4L569.0 367.4L575.0 367.5L581.0 367.5L587.0 367.5L593.0 367.6L599.0 367.6L605.0 367.6L611.0 367.7L617.0 367.7L623.0 367.7L624.0 367.8L624.0 433.0Z" fill="url(#g46)"/><path d="M167.8 433.0L167.8 424.7L167.8 354.1L170.5 363.5L173.6 372.5L174.2 361.4L176.0 330.1L177.4 282.1L178.5 297.4L180.0 310.6L183.0 321.1L186.0 327.3L190.0 334.3L198.0 342.6L205.0 347.5L213.0 351.3L215.0 352.0L221.0 353.9L227.0 355.6L233.0 357.3L239.0 358.8L240.0 359.0L245.0 360.1L251.0 361.4L257.0 362.5L260.0 363.0L263.0 363.4L269.0 364.2L275.0 364.9L281.0 365.5L287.0 366.1L293.0 366.5L299.0 366.9L300.0 367.0L305.0 367.3L311.0 367.6L317.0 367.9L323.0 368.2L329.0 368.4L335.0 368.6L341.0 368.8L347.0 368.9L350.0 369.0L353.0 369.1L359.0 369.2L365.0 369.3L371.0 369.4L377.0 369.5L383.0 369.5L389.0 369.6L395.0 369.7L401.0 369.7L407.0 369.8L413.0 369.9L419.0 369.9L425.0 370.0L430.0 370.0L431.0 370.0L437.0 370.1L443.0 370.1L449.0 370.1L455.0 370.2L461.0 370.2L467.0 370.2L473.0 370.3L479.0 370.3L485.0 370.3L491.0 370.4L497.0 370.4L503.0 370.4L509.0 370.4L515.0 370.5L520.0 370.5L521.0 370.5L527.0 370.5L533.0 370.6L539.0 370.6L545.0 370.6L551.0 370.7L557.0 370.7L563.0 370.7L569.0 370.7L575.0 370.8L581.0 370.8L587.0 370.8L593.0 370.9L599.0 370.9L605.0 370.9L611.0 370.9L617.0 371.0L623.0 371.0L624.0 371.0L624.0 433.0Z" fill="url(#g47)"/><path d="M167.8 433.0L167.8 425.3L167.8 359.9L170.5 368.6L173.6 377.0L174.2 366.7L176.0 337.7L177.4 293.3L178.5 307.5L180.0 319.7L183.0 329.4L186.0 335.1L190.0 341.6L198.0 349.3L205.0 353.8L213.0 357.4L215.0 358.0L221.0 359.7L227.0 361.3L233.0 362.7L239.0 364.0L240.0 364.2L245.0 365.3L251.0 366.4L257.0 367.3L260.0 367.8L263.0 368.1L269.0 368.8L275.0 369.4L281.0 370.0L287.0 370.5L293.0 370.9L299.0 371.3L300.0 371.4L305.0 371.6L311.0 372.0L317.0 372.2L323.0 372.5L329.0 372.7L335.0 373.0L341.0 373.1L347.0 373.3L350.0 373.4L353.0 373.4L359.0 373.6L365.0 373.7L371.0 373.8L377.0 373.9L383.0 374.0L389.0 374.1L395.0 374.2L401.0 374.3L407.0 374.4L413.0 374.4L419.0 374.5L425.0 374.6L430.0 374.6L431.0 374.6L437.0 374.7L443.0 374.7L449.0 374.8L455.0 374.8L461.0 374.9L467.0 374.9L473.0 375.0L479.0 375.0L485.0 375.0L491.0 375.1L497.0 375.1L503.0 375.1L509.0 375.2L515.0 375.2L520.0 375.2L521.0 375.3L527.0 375.3L533.0 375.3L539.0 375.4L545.0 375.4L551.0 375.4L557.0 375.5L563.0 375.5L569.0 375.6L575.0 375.6L581.0 375.6L587.0 375.7L593.0 375.7L599.0 375.7L605.0 375.8L611.0 375.8L617.0 375.8L623.0 375.9L624.0 375.9L624.0 433.0Z" fill="url(#g48)"/><path d="M167.8 433.0L167.8 425.9L167.8 365.8L170.5 373.8L173.6 381.5L174.2 372.0L176.0 345.3L177.4 304.5L178.5 317.5L180.0 328.8L183.0 337.6L186.0 343.0L190.0 348.9L198.0 356.0L205.0 360.2L213.0 363.4L215.0 364.0L221.0 365.5L227.0 366.9L233.0 368.2L239.0 369.3L240.0 369.5L245.0 370.4L251.0 371.3L257.0 372.1L260.0 372.5L263.0 372.8L269.0 373.4L275.0 374.0L281.0 374.5L287.0 374.9L293.0 375.3L299.0 375.7L300.0 375.8L305.0 376.0L311.0 376.3L317.0 376.6L323.0 376.8L329.0 377.1L335.0 377.3L341.0 377.5L347.0 377.7L350.0 377.8L353.0 377.8L359.0 378.0L365.0 378.1L371.0 378.3L377.0 378.4L383.0 378.5L389.0 378.6L395.0 378.7L401.0 378.8L407.0 378.9L413.0 379.0L419.0 379.1L425.0 379.2L430.0 379.2L431.0 379.3L437.0 379.3L443.0 379.4L449.0 379.4L455.0 379.5L461.0 379.6L467.0 379.6L473.0 379.7L479.0 379.7L485.0 379.7L491.0 379.8L497.0 379.8L503.0 379.9L509.0 379.9L515.0 380.0L520.0 380.0L521.0 380.0L527.0 380.1L533.0 380.1L539.0 380.1L545.0 380.2L551.0 380.2L557.0 380.3L563.0 380.3L569.0 380.4L575.0 380.4L581.0 380.5L587.0 380.5L593.0 380.5L599.0 380.6L605.0 380.6L611.0 380.7L617.0 380.7L623.0 380.7L624.0 380.8L624.0 433.0Z" fill="url(#g49)"/><path d="M167.8 433.0L167.8 426.5L167.8 371.6L170.5 378.9L173.6 386.0L174.2 377.3L176.0 353.0L177.4 315.7L178.5 327.5L180.0 337.8L183.0 345.9L186.0 350.8L190.0 356.2L198.0 362.7L205.0 366.5L213.0 369.5L215.0 370.0L221.0 371.3L227.0 372.5L233.0 373.6L239.0 374.6L240.0 374.8L245.0 375.5L251.0 376.3L257.0 377.0L260.0 377.2L263.0 377.5L269.0 378.0L275.0 378.5L281.0 379.0L287.0 379.4L293.0 379.7L299.0 380.1L300.0 380.1L305.0 380.4L311.0 380.7L317.0 380.9L323.0 381.2L329.0 381.4L335.0 381.6L341.0 381.9L347.0 382.0L350.0 382.1L353.0 382.2L359.0 382.4L365.0 382.5L371.0 382.7L377.0 382.8L383.0 383.0L389.0 383.1L395.0 383.3L401.0 383.4L407.0 383.5L413.0 383.6L419.0 383.7L425.0 383.8L430.0 383.9L431.0 383.9L437.0 384.0L443.0 384.0L449.0 384.1L455.0 384.2L461.0 384.2L467.0 384.3L473.0 384.3L479.0 384.4L485.0 384.5L491.0 384.5L497.0 384.6L503.0 384.6L509.0 384.7L515.0 384.7L520.0 384.8L521.0 384.8L527.0 384.8L533.0 384.9L539.0 384.9L545.0 385.0L551.0 385.0L557.0 385.1L563.0 385.1L569.0 385.2L575.0 385.2L581.0 385.3L587.0 385.3L593.0 385.4L599.0 385.4L605.0 385.5L611.0 385.5L617.0 385.6L623.0 385.6L624.0 385.6L624.0 433.0Z" fill="url(#g50)"/><path d="M167.8 433.0L167.8 427.1L167.8 377.5L170.5 384.1L173.6 390.4L174.2 382.6L176.0 360.6L177.4 326.8L178.5 337.6L180.0 346.9L183.0 354.2L186.0 358.6L190.0 363.5L198.0 369.4L205.0 372.8L213.0 375.5L215.0 376.0L221.0 377.1L227.0 378.1L233.0 379.1L239.0 379.9L240.0 380.0L245.0 380.6L251.0 381.2L257.0 381.8L260.0 382.0L263.0 382.2L269.0 382.7L275.0 383.1L281.0 383.5L287.0 383.8L293.0 384.1L299.0 384.5L300.0 384.5L305.0 384.7L311.0 385.0L317.0 385.3L323.0 385.5L329.0 385.8L335.0 386.0L341.0 386.2L347.0 386.4L350.0 386.5L353.0 386.6L359.0 386.8L365.0 387.0L371.0 387.1L377.0 387.3L383.0 387.5L389.0 387.6L395.0 387.8L401.0 387.9L407.0 388.1L413.0 388.2L419.0 388.3L425.0 388.4L430.0 388.5L431.0 388.5L437.0 388.6L443.0 388.7L449.0 388.8L455.0 388.8L461.0 388.9L467.0 389.0L473.0 389.0L479.0 389.1L485.0 389.2L491.0 389.2L497.0 389.3L503.0 389.3L509.0 389.4L515.0 389.4L520.0 389.5L521.0 389.5L527.0 389.6L533.0 389.6L539.0 389.7L545.0 389.8L551.0 389.8L557.0 389.9L563.0 389.9L569.0 390.0L575.0 390.0L581.0 390.1L587.0 390.2L593.0 390.2L599.0 390.3L605.0 390.3L611.0 390.4L617.0 390.4L623.0 390.5L624.0 390.5L624.0 433.0Z" fill="url(#g51)"/><path d="M167.8 433.0L167.8 427.3L167.8 378.9L170.5 385.4L173.6 391.6L174.2 383.9L176.0 362.5L177.4 329.6L178.5 340.1L180.0 349.2L183.0 356.3L186.0 360.6L190.0 365.4L198.0 371.1L205.0 374.4L213.0 377.0L215.0 377.5L221.0 378.6L227.0 379.6L233.0 380.5L239.0 381.4L240.0 381.5L245.0 382.1L251.0 382.9L257.0 383.5L260.0 383.8L263.0 384.0L269.0 384.4L275.0 384.9L281.0 385.2L287.0 385.6L293.0 385.9L299.0 386.2L300.0 386.2L305.0 386.5L311.0 386.8L317.0 387.0L323.0 387.3L329.0 387.5L335.0 387.7L341.0 388.0L347.0 388.2L350.0 388.2L353.0 388.3L359.0 388.5L365.0 388.7L371.0 388.9L377.0 389.1L383.0 389.2L389.0 389.4L395.0 389.5L401.0 389.7L407.0 389.8L413.0 389.9L419.0 390.1L425.0 390.2L430.0 390.2L431.0 390.3L437.0 390.4L443.0 390.4L449.0 390.5L455.0 390.6L461.0 390.7L467.0 390.7L473.0 390.8L479.0 390.8L485.0 390.9L491.0 391.0L497.0 391.0L503.0 391.1L509.0 391.1L515.0 391.2L520.0 391.2L521.0 391.3L527.0 391.3L533.0 391.4L539.0 391.4L545.0 391.5L551.0 391.6L557.0 391.6L563.0 391.7L569.0 391.7L575.0 391.8L581.0 391.9L587.0 391.9L593.0 392.0L599.0 392.0L605.0 392.1L611.0 392.1L617.0 392.2L623.0 392.2L624.0 392.2L624.0 433.0Z" fill="url(#g52)"/><path d="M167.8 433.0L167.8 427.4L167.8 380.4L170.5 386.6L173.6 392.7L174.2 385.3L176.0 364.4L177.4 332.4L178.5 342.6L180.0 351.4L183.0 358.4L186.0 362.5L190.0 367.2L198.0 372.7L205.0 376.0L213.0 378.5L215.0 379.0L221.0 380.0L227.0 381.0L233.0 382.0L239.0 382.9L240.0 383.0L245.0 383.7L251.0 384.5L257.0 385.2L260.0 385.5L263.0 385.8L269.0 386.2L275.0 386.6L281.0 387.0L287.0 387.3L293.0 387.7L299.0 388.0L300.0 388.0L305.0 388.2L311.0 388.5L317.0 388.8L323.0 389.0L329.0 389.3L335.0 389.5L341.0 389.7L347.0 389.9L350.0 390.0L353.0 390.1L359.0 390.3L365.0 390.5L371.0 390.6L377.0 390.8L383.0 391.0L389.0 391.1L395.0 391.3L401.0 391.4L407.0 391.6L413.0 391.7L419.0 391.8L425.0 391.9L430.0 392.0L431.0 392.0L437.0 392.1L443.0 392.2L449.0 392.3L455.0 392.3L461.0 392.4L467.0 392.5L473.0 392.5L479.0 392.6L485.0 392.7L491.0 392.7L497.0 392.8L503.0 392.8L509.0 392.9L515.0 392.9L520.0 393.0L521.0 393.0L527.0 393.1L533.0 393.1L539.0 393.2L545.0 393.3L551.0 393.3L557.0 393.4L563.0 393.4L569.0 393.5L575.0 393.5L581.0 393.6L587.0 393.7L593.0 393.7L599.0 393.8L605.0 393.8L611.0 393.9L617.0 393.9L623.0 394.0L624.0 394.0L624.0 433.0Z" fill="url(#g53)"/><path d="M167.8 433.0L167.8 427.6L167.8 382.3L170.5 388.4L173.6 394.2L174.2 387.0L176.0 366.9L177.4 336.1L178.5 346.0L180.0 354.4L183.0 361.1L186.0 365.2L190.0 369.6L198.0 375.0L205.0 378.1L213.0 380.6L215.0 381.0L221.0 382.2L227.0 383.4L233.0 384.4L239.0 385.4L240.0 385.5L245.0 386.2L251.0 387.0L257.0 387.7L260.0 388.0L263.0 388.3L269.0 388.8L275.0 389.3L281.0 389.8L287.0 390.2L293.0 390.6L299.0 390.9L300.0 391.0L305.0 391.3L311.0 391.6L317.0 392.0L323.0 392.3L329.0 392.6L335.0 392.9L341.0 393.2L347.0 393.4L350.0 393.5L353.0 393.6L359.0 393.8L365.0 394.0L371.0 394.2L377.0 394.3L383.0 394.5L389.0 394.7L395.0 394.8L401.0 394.9L407.0 395.1L413.0 395.2L419.0 395.3L425.0 395.4L430.0 395.5L431.0 395.5L437.0 395.6L443.0 395.7L449.0 395.8L455.0 395.8L461.0 395.9L467.0 396.0L473.0 396.0L479.0 396.1L485.0 396.2L491.0 396.2L497.0 396.3L503.0 396.3L509.0 396.4L515.0 396.4L520.0 396.5L521.0 396.5L527.0 396.6L533.0 396.6L539.0 396.7L545.0 396.8L551.0 396.8L557.0 396.9L563.0 396.9L569.0 397.0L575.0 397.0L581.0 397.1L587.0 397.2L593.0 397.2L599.0 397.3L605.0 397.3L611.0 397.4L617.0 397.4L623.0 397.5L624.0 397.5L624.0 433.0Z" fill="url(#g54)"/><path d="M167.8 433.0L167.8 427.8L167.8 383.8L170.5 389.7L173.6 395.3L174.2 388.4L176.0 368.8L177.4 338.9L178.5 348.5L180.0 356.7L183.0 363.2L186.0 367.1L190.0 371.4L198.0 376.6L205.0 379.7L213.0 382.1L215.0 382.5L221.0 383.7L227.0 384.8L233.0 385.9L239.0 386.8L240.0 387.0L245.0 387.8L251.0 388.7L257.0 389.4L260.0 389.8L263.0 390.0L269.0 390.6L275.0 391.1L281.0 391.5L287.0 391.9L293.0 392.3L299.0 392.7L300.0 392.8L305.0 393.0L311.0 393.4L317.0 393.7L323.0 394.1L329.0 394.4L335.0 394.6L341.0 394.9L347.0 395.1L350.0 395.2L353.0 395.4L359.0 395.5L365.0 395.7L371.0 395.9L377.0 396.1L383.0 396.3L389.0 396.4L395.0 396.6L401.0 396.7L407.0 396.8L413.0 397.0L419.0 397.1L425.0 397.2L430.0 397.2L431.0 397.3L437.0 397.4L443.0 397.4L449.0 397.5L455.0 397.6L461.0 397.7L467.0 397.7L473.0 397.8L479.0 397.8L485.0 397.9L491.0 398.0L497.0 398.0L503.0 398.1L509.0 398.1L515.0 398.2L520.0 398.2L521.0 398.3L527.0 398.3L533.0 398.4L539.0 398.4L545.0 398.5L551.0 398.6L557.0 398.6L563.0 398.7L569.0 398.7L575.0 398.8L581.0 398.9L587.0 398.9L593.0 399.0L599.0 399.0L605.0 399.1L611.0 399.1L617.0 399.2L623.0 399.2L624.0 399.2L624.0 433.0Z" fill="url(#g55)"/><path d="M167.8 433.0L167.8 428.0L167.8 385.3L170.5 390.9L173.6 396.4L174.2 389.7L176.0 370.8L177.4 341.7L178.5 351.0L180.0 359.0L183.0 365.3L186.0 369.1L190.0 373.3L198.0 378.3L205.0 381.3L213.0 383.6L215.0 384.0L221.0 385.2L227.0 386.3L233.0 387.3L239.0 388.3L240.0 388.5L245.0 389.3L251.0 390.3L257.0 391.2L260.0 391.5L263.0 391.8L269.0 392.4L275.0 392.8L281.0 393.3L287.0 393.7L293.0 394.1L299.0 394.4L300.0 394.5L305.0 394.8L311.0 395.1L317.0 395.5L323.0 395.8L329.0 396.1L335.0 396.4L341.0 396.7L347.0 396.9L350.0 397.0L353.0 397.1L359.0 397.3L365.0 397.5L371.0 397.7L377.0 397.8L383.0 398.0L389.0 398.2L395.0 398.3L401.0 398.4L407.0 398.6L413.0 398.7L419.0 398.8L425.0 398.9L430.0 399.0L431.0 399.0L437.0 399.1L443.0 399.2L449.0 399.3L455.0 399.3L461.0 399.4L467.0 399.5L473.0 399.5L479.0 399.6L485.0 399.7L491.0 399.7L497.0 399.8L503.0 399.8L509.0 399.9L515.0 399.9L520.0 400.0L521.0 400.0L527.0 400.1L533.0 400.1L539.0 400.2L545.0 400.3L551.0 400.3L557.0 400.4L563.0 400.4L569.0 400.5L575.0 400.5L581.0 400.6L587.0 400.7L593.0 400.7L599.0 400.8L605.0 400.8L611.0 400.9L617.0 400.9L623.0 401.0L624.0 401.0L624.0 433.0Z" fill="url(#g56)"/><path d="M167.8 433.0L167.8 428.5L167.8 390.3L170.5 395.4L173.6 400.2L174.2 394.2L176.0 377.3L177.4 351.3L178.5 359.6L180.0 366.7L183.0 372.4L186.0 375.8L190.0 379.5L198.0 384.1L205.0 386.7L213.0 388.8L215.0 389.1L221.0 390.2L227.0 391.2L233.0 392.1L239.0 393.0L240.0 393.1L245.0 393.9L251.0 394.7L257.0 395.5L260.0 395.8L263.0 396.1L269.0 396.5L275.0 397.0L281.0 397.4L287.0 397.7L293.0 398.0L299.0 398.4L300.0 398.4L305.0 398.7L311.0 399.0L317.0 399.3L323.0 399.6L329.0 399.9L335.0 400.2L341.0 400.4L347.0 400.6L350.0 400.7L353.0 400.8L359.0 401.0L365.0 401.2L371.0 401.3L377.0 401.5L383.0 401.6L389.0 401.8L395.0 401.9L401.0 402.1L407.0 402.2L413.0 402.3L419.0 402.4L425.0 402.5L430.0 402.6L431.0 402.6L437.0 402.7L443.0 402.7L449.0 402.8L455.0 402.9L461.0 403.0L467.0 403.0L473.0 403.1L479.0 403.1L485.0 403.2L491.0 403.2L497.0 403.3L503.0 403.3L509.0 403.4L515.0 403.5L520.0 403.5L521.0 403.5L527.0 403.6L533.0 403.6L539.0 403.7L545.0 403.7L551.0 403.8L557.0 403.8L563.0 403.9L569.0 404.0L575.0 404.0L581.0 404.1L587.0 404.1L593.0 404.2L599.0 404.2L605.0 404.3L611.0 404.3L617.0 404.4L623.0 404.4L624.0 404.4L624.0 433.0Z" fill="url(#g57)"/><path d="M167.8 433.0L167.8 429.0L167.8 395.3L170.5 399.8L173.6 404.1L174.2 398.8L176.0 383.8L177.4 360.9L178.5 368.2L180.0 374.5L183.0 379.5L186.0 382.5L190.0 385.8L198.0 389.8L205.0 392.1L213.0 394.0L215.0 394.3L221.0 395.2L227.0 396.1L233.0 396.9L239.0 397.7L240.0 397.8L245.0 398.4L251.0 399.2L257.0 399.8L260.0 400.1L263.0 400.3L269.0 400.7L275.0 401.1L281.0 401.4L287.0 401.7L293.0 402.0L299.0 402.3L300.0 402.4L305.0 402.6L311.0 402.9L317.0 403.2L323.0 403.4L329.0 403.7L335.0 403.9L341.0 404.1L347.0 404.3L350.0 404.4L353.0 404.5L359.0 404.7L365.0 404.8L371.0 405.0L377.0 405.1L383.0 405.3L389.0 405.4L395.0 405.5L401.0 405.7L407.0 405.8L413.0 405.9L419.0 406.0L425.0 406.1L430.0 406.1L431.0 406.2L437.0 406.2L443.0 406.3L449.0 406.4L455.0 406.4L461.0 406.5L467.0 406.5L473.0 406.6L479.0 406.7L485.0 406.7L491.0 406.8L497.0 406.8L503.0 406.9L509.0 406.9L515.0 407.0L520.0 407.0L521.0 407.0L527.0 407.1L533.0 407.1L539.0 407.2L545.0 407.2L551.0 407.3L557.0 407.3L563.0 407.4L569.0 407.4L575.0 407.5L581.0 407.5L587.0 407.6L593.0 407.6L599.0 407.7L605.0 407.7L611.0 407.8L617.0 407.8L623.0 407.8L624.0 407.9L624.0 433.0Z" fill="url(#g58)"/><path d="M167.8 433.0L167.8 429.5L167.8 400.3L170.5 404.2L173.6 407.9L174.2 403.3L176.0 390.4L177.4 370.5L178.5 376.8L180.0 382.3L183.0 386.6L186.0 389.2L190.0 392.1L198.0 395.5L205.0 397.6L213.0 399.1L215.0 399.4L221.0 400.2L227.0 401.0L233.0 401.7L239.0 402.3L240.0 402.4L245.0 403.0L251.0 403.6L257.0 404.1L260.0 404.4L263.0 404.6L269.0 404.9L275.0 405.2L281.0 405.5L287.0 405.8L293.0 406.0L299.0 406.2L300.0 406.3L305.0 406.5L311.0 406.7L317.0 407.0L323.0 407.2L329.0 407.5L335.0 407.7L341.0 407.9L347.0 408.1L350.0 408.1L353.0 408.2L359.0 408.4L365.0 408.5L371.0 408.7L377.0 408.8L383.0 408.9L389.0 409.0L395.0 409.2L401.0 409.3L407.0 409.4L413.0 409.5L419.0 409.6L425.0 409.7L430.0 409.7L431.0 409.7L437.0 409.8L443.0 409.9L449.0 409.9L455.0 410.0L461.0 410.0L467.0 410.1L473.0 410.1L479.0 410.2L485.0 410.2L491.0 410.3L497.0 410.3L503.0 410.4L509.0 410.4L515.0 410.5L520.0 410.5L521.0 410.5L527.0 410.6L533.0 410.6L539.0 410.7L545.0 410.7L551.0 410.7L557.0 410.8L563.0 410.8L569.0 410.9L575.0 410.9L581.0 411.0L587.0 411.0L593.0 411.1L599.0 411.1L605.0 411.2L611.0 411.2L617.0 411.2L623.0 411.3L624.0 411.3L624.0 433.0Z" fill="url(#g59)"/><path d="M167.8 433.0L167.8 430.1L167.8 405.3L170.5 408.6L173.6 411.8L174.2 407.9L176.0 396.9L177.4 380.0L178.5 385.4L180.0 390.1L183.0 393.7L186.0 395.9L190.0 398.3L198.0 401.3L205.0 403.0L213.0 404.3L215.0 404.6L221.0 405.2L227.0 405.8L233.0 406.4L239.0 407.0L240.0 407.1L245.0 407.5L251.0 408.0L257.0 408.5L260.0 408.6L263.0 408.8L269.0 409.1L275.0 409.3L281.0 409.6L287.0 409.8L293.0 410.0L299.0 410.2L300.0 410.2L305.0 410.4L311.0 410.6L317.0 410.8L323.0 411.0L329.0 411.2L335.0 411.4L341.0 411.6L347.0 411.8L350.0 411.9L353.0 411.9L359.0 412.1L365.0 412.2L371.0 412.3L377.0 412.4L383.0 412.6L389.0 412.7L395.0 412.8L401.0 412.9L407.0 413.0L413.0 413.1L419.0 413.2L425.0 413.2L430.0 413.3L431.0 413.3L437.0 413.4L443.0 413.4L449.0 413.5L455.0 413.5L461.0 413.6L467.0 413.6L473.0 413.7L479.0 413.7L485.0 413.8L491.0 413.8L497.0 413.8L503.0 413.9L509.0 413.9L515.0 414.0L520.0 414.0L521.0 414.0L527.0 414.1L533.0 414.1L539.0 414.1L545.0 414.2L551.0 414.2L557.0 414.3L563.0 414.3L569.0 414.4L575.0 414.4L581.0 414.4L587.0 414.5L593.0 414.5L599.0 414.6L605.0 414.6L611.0 414.6L617.0 414.7L623.0 414.7L624.0 414.7L624.0 433.0Z" fill="url(#g60)"/><path d="M167.8 433.0L167.8 430.6L167.8 410.3L170.5 413.0L173.6 415.6L174.2 412.4L176.0 403.4L177.4 389.6L178.5 394.0L180.0 397.8L183.0 400.8L186.0 402.6L190.0 404.6L198.0 407.0L205.0 408.4L213.0 409.5L215.0 409.7L221.0 410.2L227.0 410.7L233.0 411.2L239.0 411.6L240.0 411.7L245.0 412.1L251.0 412.5L257.0 412.8L260.0 412.9L263.0 413.1L269.0 413.3L275.0 413.5L281.0 413.6L287.0 413.8L293.0 414.0L299.0 414.1L300.0 414.1L305.0 414.3L311.0 414.5L317.0 414.7L323.0 414.8L329.0 415.0L335.0 415.2L341.0 415.4L347.0 415.5L350.0 415.6L353.0 415.6L359.0 415.8L365.0 415.9L371.0 416.0L377.0 416.1L383.0 416.2L389.0 416.3L395.0 416.4L401.0 416.5L407.0 416.6L413.0 416.7L419.0 416.7L425.0 416.8L430.0 416.9L431.0 416.9L437.0 416.9L443.0 417.0L449.0 417.0L455.0 417.1L461.0 417.1L467.0 417.2L473.0 417.2L479.0 417.2L485.0 417.3L491.0 417.3L497.0 417.4L503.0 417.4L509.0 417.4L515.0 417.5L520.0 417.5L521.0 417.5L527.0 417.5L533.0 417.6L539.0 417.6L545.0 417.7L551.0 417.7L557.0 417.7L563.0 417.8L569.0 417.8L575.0 417.9L581.0 417.9L587.0 417.9L593.0 418.0L599.0 418.0L605.0 418.0L611.0 418.1L617.0 418.1L623.0 418.1L624.0 418.1L624.0 433.0Z" fill="url(#g61)"/><path d="M167.8 433.0L167.8 431.1L167.8 415.3L170.5 417.4L173.6 419.5L174.2 417.0L176.0 410.0L177.4 399.2L178.5 402.6L180.0 405.6L183.0 407.9L186.0 409.3L190.0 410.9L198.0 412.8L205.0 413.8L213.0 414.7L215.0 414.9L221.0 415.3L227.0 415.6L233.0 416.0L239.0 416.3L240.0 416.4L245.0 416.6L251.0 416.9L257.0 417.1L260.0 417.2L263.0 417.3L269.0 417.5L275.0 417.6L281.0 417.7L287.0 417.8L293.0 417.9L299.0 418.0L300.0 418.1L305.0 418.2L311.0 418.3L317.0 418.5L323.0 418.6L329.0 418.8L335.0 419.0L341.0 419.1L347.0 419.2L350.0 419.3L353.0 419.3L359.0 419.4L365.0 419.6L371.0 419.7L377.0 419.8L383.0 419.8L389.0 419.9L395.0 420.0L401.0 420.1L407.0 420.2L413.0 420.3L419.0 420.3L425.0 420.4L430.0 420.4L431.0 420.4L437.0 420.5L443.0 420.5L449.0 420.6L455.0 420.6L461.0 420.7L467.0 420.7L473.0 420.7L479.0 420.8L485.0 420.8L491.0 420.8L497.0 420.9L503.0 420.9L509.0 420.9L515.0 421.0L520.0 421.0L521.0 421.0L527.0 421.0L533.0 421.1L539.0 421.1L545.0 421.1L551.0 421.2L557.0 421.2L563.0 421.2L569.0 421.3L575.0 421.3L581.0 421.3L587.0 421.4L593.0 421.4L599.0 421.4L605.0 421.5L611.0 421.5L617.0 421.5L623.0 421.6L624.0 421.6L624.0 433.0Z" fill="url(#g62)"/><path d="M167.8 433.0L167.8 431.7L167.8 420.3L170.5 421.8L173.6 423.3L174.2 421.5L176.0 416.5L177.4 408.8L178.5 411.2L180.0 413.4L183.0 415.0L186.0 416.0L190.0 417.2L198.0 418.5L205.0 419.3L213.0 419.9L215.0 420.0L221.0 420.3L227.0 420.5L233.0 420.8L239.0 421.0L240.0 421.0L245.0 421.1L251.0 421.3L257.0 421.4L260.0 421.5L263.0 421.5L269.0 421.6L275.0 421.7L281.0 421.8L287.0 421.8L293.0 421.9L299.0 422.0L300.0 422.0L305.0 422.1L311.0 422.2L317.0 422.3L323.0 422.5L329.0 422.6L335.0 422.7L341.0 422.8L347.0 423.0L350.0 423.0L353.0 423.0L359.0 423.1L365.0 423.2L371.0 423.3L377.0 423.4L383.0 423.5L389.0 423.6L395.0 423.6L401.0 423.7L407.0 423.8L413.0 423.8L419.0 423.9L425.0 424.0L430.0 424.0L431.0 424.0L437.0 424.1L443.0 424.1L449.0 424.1L455.0 424.2L461.0 424.2L467.0 424.2L473.0 424.3L479.0 424.3L485.0 424.3L491.0 424.4L497.0 424.4L503.0 424.4L509.0 424.4L515.0 424.5L520.0 424.5L521.0 424.5L527.0 424.5L533.0 424.6L539.0 424.6L545.0 424.6L551.0 424.7L557.0 424.7L563.0 424.7L569.0 424.7L575.0 424.8L581.0 424.8L587.0 424.8L593.0 424.9L599.0 424.9L605.0 424.9L611.0 424.9L617.0 425.0L623.0 425.0L624.0 425.0L624.0 433.0Z" fill="url(#g63)"/><path d="M167.8 433.0L167.8 431.9L167.8 422.9L170.5 424.1L173.6 425.2L174.2 423.8L176.0 419.8L177.4 413.6L178.5 415.6L180.0 417.3L183.0 418.6L186.0 419.4L190.0 420.3L198.0 421.4L205.0 422.0L213.0 422.5L215.0 422.6L221.0 422.8L227.0 423.0L233.0 423.2L239.0 423.4L240.0 423.4L245.0 423.5L251.0 423.6L257.0 423.8L260.0 423.8L263.0 423.8L269.0 423.9L275.0 424.0L281.0 424.0L287.0 424.1L293.0 424.1L299.0 424.2L300.0 424.2L305.0 424.3L311.0 424.4L317.0 424.5L323.0 424.6L329.0 424.7L335.0 424.8L341.0 424.9L347.0 425.0L350.0 425.0L353.0 425.0L359.0 425.1L365.0 425.2L371.0 425.3L377.0 425.3L383.0 425.4L389.0 425.5L395.0 425.5L401.0 425.6L407.0 425.6L413.0 425.7L419.0 425.7L425.0 425.8L430.0 425.8L431.0 425.8L437.0 425.8L443.0 425.9L449.0 425.9L455.0 425.9L461.0 426.0L467.0 426.0L473.0 426.0L479.0 426.0L485.0 426.1L491.0 426.1L497.0 426.1L503.0 426.1L509.0 426.2L515.0 426.2L520.0 426.2L521.0 426.2L527.0 426.2L533.0 426.3L539.0 426.3L545.0 426.3L551.0 426.3L557.0 426.3L563.0 426.4L569.0 426.4L575.0 426.4L581.0 426.4L587.0 426.5L593.0 426.5L599.0 426.5L605.0 426.5L611.0 426.6L617.0 426.6L623.0 426.6L624.0 426.6L624.0 433.0Z" fill="url(#g64)"/><path d="M167.8 433.0L167.8 432.2L167.8 425.4L170.5 426.3L173.6 427.2L174.2 426.1L176.0 423.1L177.4 418.5L178.5 419.9L180.0 421.2L183.0 422.2L186.0 422.8L190.0 423.5L198.0 424.3L205.0 424.8L213.0 425.1L215.0 425.2L221.0 425.4L227.0 425.5L233.0 425.7L239.0 425.8L240.0 425.8L245.0 425.9L251.0 426.0L257.0 426.1L260.0 426.1L263.0 426.1L269.0 426.2L275.0 426.2L281.0 426.3L287.0 426.3L293.0 426.3L299.0 426.4L300.0 426.4L305.0 426.4L311.0 426.5L317.0 426.6L323.0 426.7L329.0 426.8L335.0 426.8L341.0 426.9L347.0 427.0L350.0 427.0L353.0 427.0L359.0 427.1L365.0 427.1L371.0 427.2L377.0 427.2L383.0 427.3L389.0 427.3L395.0 427.4L401.0 427.4L407.0 427.5L413.0 427.5L419.0 427.5L425.0 427.6L430.0 427.6L431.0 427.6L437.0 427.6L443.0 427.7L449.0 427.7L455.0 427.7L461.0 427.7L467.0 427.7L473.0 427.8L479.0 427.8L485.0 427.8L491.0 427.8L497.0 427.8L503.0 427.8L509.0 427.9L515.0 427.9L520.0 427.9L521.0 427.9L527.0 427.9L533.0 427.9L539.0 428.0L545.0 428.0L551.0 428.0L557.0 428.0L563.0 428.0L569.0 428.0L575.0 428.1L581.0 428.1L587.0 428.1L593.0 428.1L599.0 428.1L605.0 428.1L611.0 428.2L617.0 428.2L623.0 428.2L624.0 428.2L624.0 433.0Z" fill="url(#g65)"/><path d="M167.8 433.0L167.8 432.5L167.8 427.9L170.5 428.5L173.6 429.1L174.2 428.4L176.0 426.4L177.4 423.3L178.5 424.3L180.0 425.1L183.0 425.8L186.0 426.2L190.0 426.7L198.0 427.2L205.0 427.5L213.0 427.8L215.0 427.8L221.0 427.9L227.0 428.0L233.0 428.1L239.0 428.2L240.0 428.2L245.0 428.3L251.0 428.3L257.0 428.4L260.0 428.4L263.0 428.4L269.0 428.5L275.0 428.5L281.0 428.5L287.0 428.5L293.0 428.6L299.0 428.6L300.0 428.6L305.0 428.6L311.0 428.7L317.0 428.7L323.0 428.8L329.0 428.8L335.0 428.9L341.0 428.9L347.0 429.0L350.0 429.0L353.0 429.0L359.0 429.1L365.0 429.1L371.0 429.1L377.0 429.2L383.0 429.2L389.0 429.2L395.0 429.3L401.0 429.3L407.0 429.3L413.0 429.3L419.0 429.4L425.0 429.4L430.0 429.4L431.0 429.4L437.0 429.4L443.0 429.4L449.0 429.5L455.0 429.5L461.0 429.5L467.0 429.5L473.0 429.5L479.0 429.5L485.0 429.5L491.0 429.5L497.0 429.6L503.0 429.6L509.0 429.6L515.0 429.6L520.0 429.6L521.0 429.6L527.0 429.6L533.0 429.6L539.0 429.6L545.0 429.7L551.0 429.7L557.0 429.7L563.0 429.7L569.0 429.7L575.0 429.7L581.0 429.7L587.0 429.7L593.0 429.7L599.0 429.8L605.0 429.8L611.0 429.8L617.0 429.8L623.0 429.8L624.0 429.8L624.0 433.0Z" fill="url(#g66)"/><path d="M167.8 433.0L167.8 432.7L167.8 430.5L170.5 430.8L173.6 431.1L174.2 430.7L176.0 429.7L177.4 428.2L178.5 428.6L180.0 429.1L183.0 429.4L186.0 429.6L190.0 429.8L198.0 430.1L205.0 430.3L213.0 430.4L215.0 430.4L221.0 430.5L227.0 430.5L233.0 430.6L239.0 430.6L240.0 430.6L245.0 430.6L251.0 430.7L257.0 430.7L260.0 430.7L263.0 430.7L269.0 430.7L275.0 430.7L281.0 430.8L287.0 430.8L293.0 430.8L299.0 430.8L300.0 430.8L305.0 430.8L311.0 430.8L317.0 430.9L323.0 430.9L329.0 430.9L335.0 430.9L341.0 431.0L347.0 431.0L350.0 431.0L353.0 431.0L359.0 431.0L365.0 431.0L371.0 431.1L377.0 431.1L383.0 431.1L389.0 431.1L395.0 431.1L401.0 431.1L407.0 431.2L413.0 431.2L419.0 431.2L425.0 431.2L430.0 431.2L431.0 431.2L437.0 431.2L443.0 431.2L449.0 431.2L455.0 431.2L461.0 431.2L467.0 431.2L473.0 431.3L479.0 431.3L485.0 431.3L491.0 431.3L497.0 431.3L503.0 431.3L509.0 431.3L515.0 431.3L520.0 431.3L521.0 431.3L527.0 431.3L533.0 431.3L539.0 431.3L545.0 431.3L551.0 431.3L557.0 431.3L563.0 431.3L569.0 431.3L575.0 431.4L581.0 431.4L587.0 431.4L593.0 431.4L599.0 431.4L605.0 431.4L611.0 431.4L617.0 431.4L623.0 431.4L624.0 431.4L624.0 433.0Z" fill="url(#g67)"/>
</g>
<defs><linearGradient id="pale" x1="0" y1="0" x2="0" y2="1"><stop offset="0" stop-color="#9ff3f5"/><stop offset="1" stop-color="#2ef0f8"/></linearGradient></defs>
<path d="M47.3 433V421L49.6 422.5V433Z" fill="#5eeef5"/>
<path d="M64.8 433L65.6 412L67 398L68.3 384L69.3 386.5L70.2 388L71 392L72.2 391L73.2 394L74 393L75 398L75.6 433Z" fill="url(#pale)"/>
<path d="M75.4 433V430.2L77 429.3L79.5 430.5L80 433Z" fill="#1a9cf0"/>
<path d="M80 433V431.5L84 432.4V433Z" fill="#7cf0f5"/>
<path d="M144.8 433V419L151 421L158 422.5L158.4 417.5L163 420L167.8 421.5V433Z" fill="#8af1f5"/>
<path d="M144.8 433V428L167.8 427V433Z" fill="#3fe9f5" opacity=".6"/>
<path d="M311 169.7L313 171.5L316 170.5L318 168.5L320.5 175L323 181.8L326 188L329.4 193.8L329.5 198.6L333 202.5L337 205.9L342 208.8L346.3 210.7L346.4 219L337 211L329.4 203.5L323 196L318 188L314 180Z" fill="#aaf0f3"/>
<path d="M427 189L427 180.4L440 186.3L460 191.6L475 193.2L475 188.2L498 190.2L498 197L498 200L475 199L460 197L440 193Z" fill="#aaf0f3"/>
<path d="M475 193.4L475 188.2L498 190.2L498 195Z" fill="#c8eef2"/>
<path d="M498 200V197L504.6 201.2L505 194L511 197L512 197V201.5L505 200Z" fill="#7feef5"/>
<defs><linearGradient id="lc" gradientUnits="userSpaceOnUse" x1="268" y1="0" x2="624" y2="0"><stop offset="0" stop-color="#00d0ff" stop-opacity="0"/><stop offset="0.1" stop-color="#00b0ff" stop-opacity=".25"/><stop offset="0.2" stop-color="#0080fa" stop-opacity=".7"/><stop offset="0.25" stop-color="#0060f8"/><stop offset="1" stop-color="#0044f0"/></linearGradient>
<linearGradient id="la" gradientUnits="userSpaceOnUse" x1="405" y1="0" x2="624" y2="0"><stop offset="0" stop-color="#00b0ff" stop-opacity="0"/><stop offset="0.2" stop-color="#0098fa"/><stop offset="0.55" stop-color="#0070f6"/><stop offset="1" stop-color="#0050f0"/></linearGradient></defs>
<path d="M268 252L280 266L290 276L300 283L310 288.5L320 293.5L330 298L346 302.5L370 305.5L400 308L430 310.75L500 313.5L560 315.8L624 318" fill="none" stroke="url(#lc)" stroke-width="2.2"/>
<path d="M392 219L400 222L412 226L430 231L450 234L470 235.3L510 237.5L520 239.5L560 243L600 246.5L624 249.5" fill="none" stroke="url(#la)" stroke-width="5" opacity="0.35"/>
<path d="M392 219L400 222L412 226L430 231L450 234L470 235.3L510 237.5L520 239.5L560 243L600 246.5L624 249.5" fill="none" stroke="url(#la)" stroke-width="2.6"/>
<path d="M500.0 242.0L530.0 243.8L560.0 246.3L600.0 251.3L624.0 254.3" fill="none" stroke="#0068f4" stroke-width="1.8" opacity="0.95" stroke-linejoin="round"/>
<path d="M440.0 247.0L458.0 247.3" fill="none" stroke="#0090f8" stroke-width="1.3" opacity="0.90" stroke-linejoin="round"/>
<path d="M576.0 96.3L582.0 101.6L590.0 106.5L600.0 111.5L612.0 117.6L624.0 122.0" fill="none" stroke="#18a0f2" stroke-width="5.0" opacity="0.40" stroke-linejoin="round"/>
<path d="M577.0 102.0L583.0 108.0L590.0 113.0L600.0 119.6L612.0 126.2L624.0 130.8" fill="none" stroke="#18a0f2" stroke-width="4.2" opacity="0.40" stroke-linejoin="round"/>
<path d="M574.8 91.0L576.0 96.3L582.0 101.6L590.0 106.5L600.0 111.5L612.0 117.6L624.0 122.0" fill="none" stroke="#1284ec" stroke-width="2.1" opacity="1.00" stroke-linejoin="round"/>
<path d="M577.0 102.0L583.0 108.0L590.0 113.0L600.0 119.6L612.0 126.2L624.0 130.8" fill="none" stroke="#1284ec" stroke-width="1.8" opacity="1.00" stroke-linejoin="round"/>
<line x1="54.4" y1="35" x2="54.4" y2="433" stroke="#000" stroke-opacity="0.025" stroke-width="0.8"/>
<line x1="80.9" y1="35" x2="80.9" y2="433" stroke="#000" stroke-opacity="0.025" stroke-width="0.8"/>
<line x1="107.4" y1="35" x2="107.4" y2="433" stroke="#000" stroke-opacity="0.025" stroke-width="0.8"/>
<line x1="133.9" y1="35" x2="133.9" y2="433" stroke="#000" stroke-opacity="0.025" stroke-width="0.8"/>
<line x1="160.4" y1="35" x2="160.4" y2="433" stroke="#000" stroke-opacity="0.025" stroke-width="0.8"/>
<line x1="186.9" y1="35" x2="186.9" y2="433" stroke="#000" stroke-opacity="0.025" stroke-width="0.8"/>
<line x1="213.4" y1="35" x2="213.4" y2="433" stroke="#000" stroke-opacity="0.025" stroke-width="0.8"/>
<line x1="239.9" y1="35" x2="239.9" y2="433" stroke="#000" stroke-opacity="0.025" stroke-width="0.8"/>
<line x1="266.4" y1="35" x2="266.4" y2="433" stroke="#000" stroke-opacity="0.025" stroke-width="0.8"/>
<line x1="292.9" y1="35" x2="292.9" y2="433" stroke="#000" stroke-opacity="0.025" stroke-width="0.8"/>
<line x1="319.4" y1="35" x2="319.4" y2="433" stroke="#000" stroke-opacity="0.025" stroke-width="0.8"/>
<line x1="345.9" y1="35" x2="345.9" y2="433" stroke="#000" stroke-opacity="0.025" stroke-width="0.8"/>
<line x1="372.4" y1="35" x2="372.4" y2="433" stroke="#000" stroke-opacity="0.025" stroke-width="0.8"/>
<line x1="398.9" y1="35" x2="398.9" y2="433" stroke="#000" stroke-opacity="0.025" stroke-width="0.8"/>
<line x1="425.4" y1="35" x2="425.4" y2="433" stroke="#000" stroke-opacity="0.025" stroke-width="0.8"/>
<line x1="451.9" y1="35" x2="451.9" y2="433" stroke="#000" stroke-opacity="0.025" stroke-width="0.8"/>
<line x1="478.4" y1="35" x2="478.4" y2="433" stroke="#000" stroke-opacity="0.025" stroke-width="0.8"/>
<line x1="504.9" y1="35" x2="504.9" y2="433" stroke="#000" stroke-opacity="0.025" stroke-width="0.8"/>
<line x1="531.4" y1="35" x2="531.4" y2="433" stroke="#000" stroke-opacity="0.025" stroke-width="0.8"/>
<line x1="557.9" y1="35" x2="557.9" y2="433" stroke="#000" stroke-opacity="0.025" stroke-width="0.8"/>
<line x1="584.4" y1="35" x2="584.4" y2="433" stroke="#000" stroke-opacity="0.025" stroke-width="0.8"/>
<line x1="610.9" y1="35" x2="610.9" y2="433" stroke="#000" stroke-opacity="0.025" stroke-width="0.8"/>
<line x1="47" y1="167.7" x2="624" y2="167.7" stroke="#000" stroke-opacity="0.025" stroke-width="0.8"/>
<line x1="47" y1="300.3" x2="624" y2="300.3" stroke="#000" stroke-opacity="0.025" stroke-width="0.8"/>
<path d="M47 433V35H624" fill="none" stroke="#dcdcdc" stroke-width="0.8"/>
<line x1="47" y1="433.2" x2="624" y2="433.2" stroke="#d0d0d0" stroke-width="0.8"/>
<line x1="600.6" y1="35" x2="600.6" y2="433" stroke="#2a2a2a" stroke-opacity=".75" stroke-width="0.9"/>
<text x="55.4" y="441.4" font-size="6.0" fill="#747474" text-anchor="middle">2021</text>
<text x="108.2" y="441.4" font-size="6.0" fill="#747474" text-anchor="middle">Oct 17</text>
<text x="161.2" y="441.4" font-size="6.0" fill="#747474" text-anchor="middle">Oct 31</text>
<text x="214.2" y="441.4" font-size="6.0" fill="#747474" text-anchor="middle">Nov 14</text>
<text x="267.2" y="441.4" font-size="6.0" fill="#747474" text-anchor="middle">Nov 28</text>
<text x="320.2" y="441.4" font-size="6.0" fill="#747474" text-anchor="middle">Dec 12</text>
<text x="373.2" y="441.4" font-size="6.0" fill="#747474" text-anchor="middle">Dec 26</text>
<text x="426.2" y="441.4" font-size="6.0" fill="#747474" text-anchor="middle">2022</text>
<text x="479.2" y="441.4" font-size="6.0" fill="#747474" text-anchor="middle">Jan 23</text>
<text x="532.2" y="441.4" font-size="6.0" fill="#747474" text-anchor="middle">Feb 6</text>
<rect x="572.3" y="433.1" width="51.5" height="11" fill="#000"/>
<text x="598" y="441.1" font-size="5.9" font-weight="bold" fill="#fff" text-anchor="middle" textLength="44" lengthAdjust="spacingAndGlyphs">Feb 24 '22, 03:00</text>
<text x="626.3" y="37.2" font-size="6.05" fill="#747474">150</text>
<text x="626.3" y="169.9" font-size="6.05" fill="#747474">100</text>
<text x="626.3" y="302.5" font-size="6.05" fill="#747474">50</text>
<text x="626.3" y="435.2" font-size="6.05" fill="#747474">0</text>
<text transform="translate(646.4 233.4) rotate(-90)" font-size="5.7" fill="#747474" text-anchor="middle">Altezza neve [cm]</text>
<line x1="688.5" y1="36" x2="688.5" y2="433" stroke="#000" stroke-opacity="0.09" stroke-width="0.8" stroke-dasharray="1 1"/>
<line x1="754.5" y1="36" x2="754.5" y2="433" stroke="#000" stroke-opacity="0.09" stroke-width="0.8" stroke-dasharray="1 1"/>
<line x1="820.5" y1="36" x2="820.5" y2="433" stroke="#000" stroke-opacity="0.09" stroke-width="0.8" stroke-dasharray="1 1"/>
<line x1="886.5" y1="36" x2="886.5" y2="433" stroke="#000" stroke-opacity="0.09" stroke-width="0.8" stroke-dasharray="1 1"/>
<line x1="675.5" y1="167.7" x2="994" y2="167.7" stroke="#000" stroke-opacity="0.08" stroke-width="0.8"/>
<line x1="675.5" y1="300.3" x2="994" y2="300.3" stroke="#000" stroke-opacity="0.08" stroke-width="0.8"/>
<rect x="947.5" y="68.30" width="5.0" height="5.95" fill="#228b22"/>
<rect x="947.5" y="74.10" width="5.0" height="5.55" fill="#add8e6"/>
<rect x="939.5" y="79.50" width="13.0" height="4.65" fill="#ffb6c1"/>
<rect x="947.5" y="84.00" width="5.0" height="3.15" fill="#add8e6"/>
<rect x="947.5" y="87.00" width="5.0" height="10.35" fill="#228b22"/>
<rect x="947.5" y="97.20" width="5.0" height="6.95" fill="#ffb6c1"/>
<rect x="947.5" y="104.00" width="5.0" height="6.25" fill="#add8e6"/>
<rect x="925.7" y="109.70" width="26.8" height="3.35" fill="#add8e6"/>
<rect x="939.6" y="112.50" width="12.9" height="3.35" fill="#add8e6"/>
<rect x="947.5" y="115.30" width="5.0" height="3.25" fill="#add8e6"/>
<rect x="925.7" y="118.00" width="26.8" height="3.75" fill="#add8e6"/>
<rect x="939.6" y="121.20" width="12.9" height="5.25" fill="#add8e6"/>
<rect x="947.5" y="126.30" width="5.0" height="11.15" fill="#228b22"/>
<rect x="939.5" y="137.30" width="13.0" height="5.25" fill="#ffb6c1"/>
<rect x="947.5" y="142.40" width="5.0" height="14.95" fill="#add8e6"/>
<rect x="926.0" y="156.80" width="26.5" height="3.75" fill="#add8e6"/>
<rect x="947.5" y="160.00" width="5.0" height="6.25" fill="#add8e6"/>
<rect x="926.0" y="165.70" width="26.5" height="10.15" fill="#add8e6"/>
<rect x="926.0" y="175.70" width="26.5" height="5.35" fill="#ffb6c1"/>
<rect x="881.7" y="180.50" width="70.8" height="20.55" fill="#ffb6c1"/>
<rect x="906.8" y="200.50" width="45.7" height="8.65" fill="#ffb6c1"/>
<rect x="906.8" y="209.00" width="45.7" height="4.95" fill="#add8e6"/>
<rect x="906.8" y="213.80" width="45.7" height="3.05" fill="#ffb6c1"/>
<rect x="906.8" y="216.70" width="45.7" height="2.45" fill="#add8e6"/>
<rect x="906.8" y="219.00" width="45.7" height="5.35" fill="#ffb6c1"/>
<rect x="881.7" y="223.80" width="70.8" height="6.55" fill="#ffb6c1"/>
<rect x="947.5" y="230.20" width="5.0" height="6.95" fill="#0000ff"/>
<rect x="947.5" y="237.00" width="5.0" height="8.15" fill="#add8e6"/>
<rect x="939.5" y="244.60" width="13.0" height="3.75" fill="#add8e6"/>
<rect x="926.2" y="247.80" width="26.3" height="14.15" fill="#add8e6"/>
<rect x="947.5" y="261.80" width="5.0" height="7.35" fill="#0000ff"/>
<rect x="939.7" y="269.00" width="12.8" height="15.85" fill="#add8e6"/>
<rect x="926.2" y="284.30" width="26.3" height="20.25" fill="#add8e6"/>
<rect x="939.7" y="304.00" width="12.8" height="2.05" fill="#add8e6"/>
<rect x="926.2" y="305.50" width="26.3" height="6.25" fill="#add8e6"/>
<rect x="947.5" y="311.60" width="5.0" height="1.75" fill="#0000ff"/>
<rect x="939.4" y="313.20" width="13.1" height="3.85" fill="#add8e6"/>
<rect x="881.7" y="316.50" width="70.8" height="3.15" fill="#add8e6"/>
<rect x="926.2" y="319.10" width="26.3" height="13.25" fill="#add8e6"/>
<rect x="926.2" y="332.20" width="26.3" height="2.55" fill="#0000ff"/>
<rect x="947.5" y="334.20" width="5.0" height="4.25" fill="#0000ff"/>
<rect x="926.2" y="337.90" width="26.3" height="10.25" fill="#0000ff"/>
<rect x="926.2" y="348.00" width="26.3" height="4.05" fill="#add8e6"/>
<rect x="881.7" y="351.50" width="70.8" height="16.85" fill="#add8e6"/>
<rect x="907.0" y="367.80" width="45.5" height="11.35" fill="#add8e6"/>
<rect x="881.7" y="378.60" width="70.8" height="45.95" fill="#add8e6"/>
<rect x="810.4" y="424.00" width="142.1" height="9.15" fill="#add8e6"/>
<rect x="925.7" y="109.9" width="26.8" height="2.6" fill="#add8e6" stroke="#708090" stroke-width="0.8"/>
<path d="M947.5 68.3H934.5V74.0H915.3V79.5H902.5V84.4H908.9V87.2H916.0V91.2H908.0V97.2H906.5V103.6H904.0V110.0H884.8V112.0H892.8V115.3H896.0V118.0H883.7V121.0H896.8V123.8H902.5V131.2H899.2V136.8H891.2V142.4H902.5V144.0H893.6V147.5H888.8V152.8H884.3V159.7H892.8V162.4H886.4V164.8H882.4V166.8H880.8V172.0H879.5V178.0H878.0V184.0H877.3V191.5H875.2V196.0H873.5V200.5H871.0V209.0H876.8V213.8H870.4V216.2H875.2V218.6H869.6V223.8H867.7V230.2H892.0V231.5H890.4V241.0H888.8V245.0H885.6V247.5H867.5V249.5H878.0V251.7H867.5V254.6H879.7V261.0H881.7V265.5H887.3V269.0H885.7V271.4H884.0V274.6H882.0V279.4H879.7V283.5H877.2V287.5H875.2V292.3H873.3V299.5H871.2V303.5H879.2V305.0H876.0V309.0H873.6V311.7H878.5V316.5H859.6V319.1H874.5V327.4H873.0V331.4H875.0V333.8H877.7V337.0H875.3V343.5H873.7V347.5H869.7V351.5H863.3V357.0H854.5V359.5H852.5V364.6H856.9V367.5H865.7V373.0H863.3V378.0H859.6V384.2H857.4V389.0H856.0V392.6H851.6V397.0H855.3V401.9H853.7V407.0H852.0V412.0H850.5V418.0H849.0V423.5H846.5V430.0H838.1" fill="none" stroke="#c97fd0" stroke-width="0.9"/>
<circle cx="884.8" cy="110" r="1.2" fill="#800080"/>
<rect x="837.2" y="429.2" width="1.8" height="1.8" fill="#b060b8"/>
<path d="M675.5 433.5V35.2H994.2V433" fill="none" stroke="#999" stroke-width="1.1"/>
<line x1="675" y1="433.2" x2="953" y2="433.2" stroke="#999" stroke-width="1.1"/>
<line x1="953" y1="35" x2="953" y2="433.5" stroke="#8a8a8a" stroke-width="1.3"/>
<line x1="688.5" y1="35" x2="688.5" y2="37.3" stroke="#999" stroke-width="0.8"/>
<line x1="754.5" y1="35" x2="754.5" y2="37.3" stroke="#999" stroke-width="0.8"/>
<line x1="820.5" y1="35" x2="820.5" y2="37.3" stroke="#999" stroke-width="0.8"/>
<line x1="886.5" y1="35" x2="886.5" y2="37.3" stroke="#999" stroke-width="0.8"/>
<line x1="952.5" y1="35" x2="952.5" y2="37.3" stroke="#999" stroke-width="0.8"/>
<line x1="688.5" y1="433" x2="688.5" y2="435" stroke="#999" stroke-width="0.8"/>
<line x1="754.5" y1="433" x2="754.5" y2="435" stroke="#999" stroke-width="0.8"/>
<line x1="820.5" y1="433" x2="820.5" y2="435" stroke="#999" stroke-width="0.8"/>
<line x1="886.5" y1="433" x2="886.5" y2="435" stroke="#999" stroke-width="0.8"/>
<line x1="926.5" y1="35" x2="926.5" y2="37.3" stroke="#999" stroke-width="0.8"/>
<line x1="947.4" y1="35" x2="947.4" y2="37.3" stroke="#999" stroke-width="0.8"/>
<line x1="994" y1="35.2" x2="996" y2="35.2" stroke="#999" stroke-width="0.8"/>
<line x1="994" y1="167.7" x2="996" y2="167.7" stroke="#999" stroke-width="0.8"/>
<line x1="994" y1="300.3" x2="996" y2="300.3" stroke="#999" stroke-width="0.8"/>
<line x1="994" y1="433.0" x2="996" y2="433.0" stroke="#999" stroke-width="0.8"/>
<text x="688.5" y="31.9" font-size="6.0" fill="#747474" text-anchor="middle">1000</text>
<text x="754.5" y="31.9" font-size="6.0" fill="#747474" text-anchor="middle">750</text>
<text x="820.5" y="31.9" font-size="6.0" fill="#747474" text-anchor="middle">500</text>
<text x="886.9" y="31.9" font-size="6.0" fill="#747474" text-anchor="middle">250</text>
<text x="952.5" y="31.9" font-size="6.0" fill="#747474" text-anchor="middle">0</text>
<text x="689.3" y="439.3" font-size="6.0" fill="#747474" text-anchor="middle">1000</text>
<text x="755.0" y="439.3" font-size="6.0" fill="#747474" text-anchor="middle">750</text>
<text x="821.0" y="439.3" font-size="6.0" fill="#747474" text-anchor="middle">500</text>
<text x="887.0" y="439.3" font-size="6.0" fill="#747474" text-anchor="middle">250</text>
<text x="688.5" y="42.8" font-size="6.3" fill="#747474" text-anchor="middle">K</text>
<text x="820.5" y="42.8" font-size="6.3" fill="#747474" text-anchor="middle">P</text>
<text x="886.9" y="42.8" font-size="6.3" fill="#747474" text-anchor="middle">1F</text>
<text x="926.5" y="42.8" font-size="6.3" fill="#747474" text-anchor="middle">4F</text>
<text x="947.4" y="42.8" font-size="6.3" fill="#747474" text-anchor="middle">F</text>
<text x="813.7" y="23.2" font-size="5.6" fill="#747474" text-anchor="middle">Test della mano [N]</text>
<text x="813.8" y="446.8" font-size="5.6" fill="#c060c8" text-anchor="middle">Densità neve [kg/m³]</text>
<circle cx="677.9" cy="47.6" r="1.1" fill="#800080"/>
<text x="683" y="49.7" font-size="5.7" fill="#9a329e">256.5 kg/m³ @ 121.66 cm</text>
<text x="996.3" y="37.2" font-size="6.05" fill="#747474">150</text>
<text x="996.3" y="169.9" font-size="6.05" fill="#747474">100</text>
<text x="996.3" y="302.5" font-size="6.05" fill="#747474">50</text>
<text x="996.3" y="435.2" font-size="6.05" fill="#747474">0</text>
<text transform="translate(1017 233.3) rotate(-90)" font-size="5.75" fill="#747474" text-anchor="middle">Altezza [cm]</text>
<line x1="957" y1="229.9" x2="994" y2="229.9" stroke="#222" stroke-width="1.3"/>
<path d="M953.2 229.9L958.2 227.8V232Z" fill="#111"/>
<text x="973.6" y="228.4" font-size="5.9" fill="#777" text-anchor="middle">rt: poor</text>
<text x="973.6" y="235.1" font-size="5.6" fill="#777" text-anchor="middle">SK38=1.06</text>
<path d="M960 98.8H1013.2a3 3 0 0 1 3 3V120.3a3 3 0 0 1-3 3H960a3 3 0 0 1-3-3V114.5L953.6 111L957 107.5V101.8a3 3 0 0 1 3-3Z" fill="#fff" stroke="#a0a0a0" stroke-width="0.9"/>
<rect x="985.4" y="102.2" width="4.2" height="3.2" fill="#fff" stroke="#555" stroke-width="0.8"/>
<text x="987" y="114.2" font-size="5.9" fill="#747474" text-anchor="middle">⌀ 0.48 mm</text>
<text x="987.8" y="120.7" font-size="5.9" fill="#747474" text-anchor="middle">121.66 / 120.74 cm</text>
</svg>
</body></html>
